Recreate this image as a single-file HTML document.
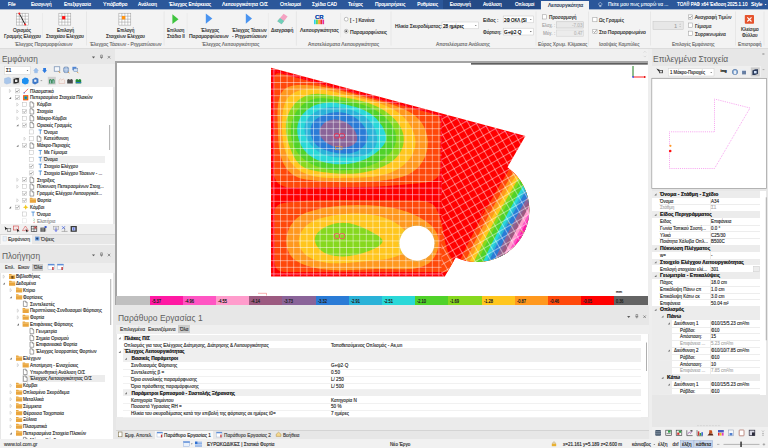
<!DOCTYPE html>
<html lang="el"><head><meta charset="utf-8"><title>ΤΟΛ ΡΑΦ</title><style>
html,body{margin:0;padding:0;}
body{width:768px;height:448px;overflow:hidden;background:#e7e7e7;position:relative;font-family:"Liberation Sans",sans-serif;}
#r{position:absolute;left:0;top:0;width:768px;height:448px;overflow:hidden;}
#r div{position:absolute;}
#r .t{white-space:nowrap;transform-origin:0 50%;text-shadow:0 0 0.2px currentColor;}
#r svg{position:absolute;left:0;top:0;}
</style></head><body><div id="r">
<div style="left:0.00px;top:0.00px;width:768.00px;height:9.00px;background:#2b579a;"></div>
<div style="left:0.00px;top:9.00px;width:768.00px;height:39.60px;background:#f3f3f3;"></div>
<div style="left:0.00px;top:9.00px;width:768.00px;height:1.00px;background:#a9bad2;"></div>
<div style="left:0.00px;top:48.30px;width:768.00px;height:0.50px;background:#dcdcdc;"></div>
<div style="left:0.00px;top:48.80px;width:768.00px;height:391.00px;background:#e7e7e7;"></div>
<div style="left:115.40px;top:48.80px;width:532.60px;height:13.00px;background:#f0f0f0;"></div>
<div style="left:115.20px;top:61.30px;width:532.80px;height:244.20px;background:#a4a4a4;"></div>
<div style="left:116.80px;top:63.20px;width:531.20px;height:242.30px;background:#ffffff;"></div>
<div style="left:0.00px;top:439.00px;width:768.00px;height:9.00px;background:#f1f1f1;"></div>
<svg width="768" height="448" viewBox="0 0 768 448">
<defs><clipPath id="slab"><path d="M271,67.8L525.4,136L444.8,276.6L271,276.6Z"/><circle cx="477" cy="209.8" r="52.3"/></clipPath>
<clipPath id="circ"><circle cx="477" cy="209.8" r="52.3"/></clipPath>
<pattern id="mesh" width="6.6" height="6.6" patternUnits="userSpaceOnUse"><path d="M0,3.3H6.6M3.3,0V6.6" stroke="#fff" stroke-width="0.62" stroke-opacity="0.72" fill="none"/></pattern>
<pattern id="mesh2" width="7" height="7" patternUnits="userSpaceOnUse" patternTransform="rotate(-30 441.5 195)"><path d="M0,3.5H7M3.5,0V7" stroke="#fff" stroke-width="0.62" stroke-opacity="0.72" fill="none"/></pattern>
</defs>
<g clip-path="url(#slab)">
<rect x="266" y="60" width="270" height="225" fill="#ff0000"/>
<path d="M274.2,80L274.2,174Q274.6,186 290,187.8L376,186.7L403,184.7L426,182.4Q440.5,180.6 440.5,168L440.5,122Q440.5,116 435,114.3L281,73.6Q274.2,71.8 274.2,79Z" fill="#ff480a"/>
<path d="M277.7,123.3L277.6,119.1L277.5,114.7L277.6,110.3L277.9,105.8L278.5,101.4L279.5,97.1L281.1,93.3L283.3,90.2L286.1,88.0L289.5,86.5L293.3,85.5L297.4,85.1L301.5,84.9L305.7,85.0L309.9,85.2L314.0,85.6L318.2,86.1L322.3,86.7L326.5,87.5L330.6,88.3L334.7,89.2L338.8,90.2L342.9,91.3L347.0,92.4L351.0,93.5L355.0,94.6L359.0,95.7L363.0,96.8L367.0,97.9L371.0,98.9L374.9,99.9L378.8,100.9L382.8,102.0L386.8,103.1L390.7,104.3L394.8,105.6L398.8,107.1L402.8,108.7L406.7,110.5L410.4,112.5L413.9,114.8L417.0,117.4L419.8,120.4L422.3,123.7L424.2,127.3L425.8,131.1L426.9,135.1L427.6,139.2L427.8,143.4L427.5,147.5L426.7,151.7L425.5,155.7L423.7,159.5L421.6,163.1L419.1,166.4L416.2,169.3L412.9,171.8L409.4,173.9L405.6,175.6L401.7,176.9L397.6,178.0L393.4,178.9L389.2,179.6L385.0,180.2L380.9,180.8L376.8,181.2L372.7,181.6L368.6,181.9L364.5,182.1L360.4,182.2L356.3,182.3L352.2,182.4L348.1,182.3L344.0,182.2L339.9,182.1L335.8,181.9L331.6,181.7L327.4,181.5L323.2,181.2L318.9,180.9L314.6,180.6L310.3,180.1L306.1,179.6L302.0,178.7L298.1,177.5L294.5,175.8L291.3,173.6L288.3,170.8L285.8,167.6L283.7,164.0L282.0,160.1L280.6,156.1L279.7,151.9L279.0,147.7L278.6,143.6L278.3,139.4L278.1,135.4L278.0,131.4L277.9,127.4Z" fill="#ff981e"/>
<path d="M282.1,123.0L282.2,119.1L282.4,115.1L282.9,111.2L283.6,107.5L284.6,103.9L285.9,100.7L287.7,97.8L290.0,95.4L292.8,93.4L295.8,91.8L299.2,90.6L302.7,89.8L306.4,89.2L310.0,88.9L313.6,88.8L317.2,89.0L320.8,89.3L324.4,89.8L327.9,90.4L331.5,91.2L335.0,92.0L338.6,92.9L342.2,93.8L345.8,94.7L349.4,95.7L353.1,96.5L356.8,97.4L360.4,98.3L364.1,99.1L367.8,100.0L371.4,100.9L375.0,101.9L378.5,103.0L382.0,104.2L385.3,105.5L388.6,106.9L391.8,108.5L394.9,110.3L397.8,112.2L400.7,114.4L403.3,116.8L405.8,119.4L408.1,122.3L410.2,125.4L412.0,128.7L413.5,132.1L414.6,135.7L415.3,139.2L415.5,142.8L415.2,146.3L414.4,149.8L413.0,153.2L411.2,156.4L409.0,159.4L406.5,162.3L403.7,164.9L400.7,167.2L397.6,169.2L394.3,170.9L391.0,172.4L387.5,173.7L384.0,174.7L380.4,175.5L376.8,176.2L373.2,176.7L369.6,177.1L366.0,177.3L362.4,177.5L358.7,177.6L355.1,177.7L351.4,177.7L347.8,177.8L344.1,177.8L340.4,177.9L336.8,178.0L333.1,178.0L329.4,177.9L325.7,177.8L322.0,177.5L318.4,177.0L314.8,176.4L311.1,175.5L307.6,174.4L304.2,173.1L300.9,171.5L297.9,169.5L295.1,167.2L292.7,164.6L290.5,161.7L288.6,158.6L287.0,155.3L285.6,151.9L284.6,148.4L283.7,145.0L283.0,141.4L282.6,137.9L282.3,134.3L282.1,130.6L282.0,126.8Z" fill="#ffc61e"/>
<path d="M286.2,122.6L286.7,119.5L287.6,116.4L288.7,113.5L290.0,110.6L291.6,107.9L293.4,105.4L295.4,103.1L297.6,100.9L300.0,99.0L302.6,97.4L305.4,96.1L308.3,95.0L311.3,94.3L314.4,93.9L317.7,93.8L321.0,94.0L324.3,94.3L327.7,94.8L331.1,95.4L334.4,96.0L337.6,96.6L340.8,97.2L343.9,97.6L347.0,98.1L350.0,98.6L353.1,99.1L356.2,99.7L359.2,100.4L362.3,101.2L365.4,102.1L368.5,103.1L371.5,104.2L374.5,105.4L377.4,106.7L380.2,108.2L383.0,109.8L385.7,111.5L388.3,113.4L390.8,115.5L393.2,117.7L395.4,120.1L397.5,122.6L399.4,125.3L401.0,128.1L402.3,131.1L403.2,134.1L403.7,137.3L403.8,140.5L403.4,143.7L402.7,146.8L401.6,149.7L400.2,152.4L398.5,154.9L396.5,157.3L394.3,159.4L391.9,161.4L389.3,163.2L386.5,164.8L383.6,166.3L380.6,167.6L377.5,168.8L374.4,169.9L371.2,170.8L368.0,171.5L364.8,172.2L361.6,172.7L358.4,173.2L355.3,173.5L352.2,173.7L349.1,173.8L346.0,173.8L342.8,173.8L339.7,173.7L336.6,173.5L333.4,173.2L330.2,172.9L327.0,172.6L323.7,172.2L320.4,171.7L317.1,171.2L313.9,170.6L310.7,169.9L307.6,169.0L304.7,167.8L302.1,166.3L299.7,164.5L297.7,162.3L295.9,159.9L294.3,157.2L292.8,154.4L291.5,151.4L290.3,148.4L289.2,145.2L288.2,142.0L287.4,138.8L286.7,135.5L286.2,132.3L286.0,129.0L285.9,125.8Z" fill="#86d81e"/>
<path d="M291.7,122.7L292.4,120.0L293.4,117.3L294.6,114.7L296.0,112.3L297.6,110.0L299.4,107.9L301.3,105.9L303.4,104.2L305.6,102.6L308.0,101.2L310.5,100.1L313.1,99.2L315.8,98.6L318.6,98.2L321.5,98.1L324.4,98.2L327.3,98.5L330.3,98.9L333.2,99.3L336.1,99.8L338.9,100.2L341.7,100.6L344.4,101.0L347.1,101.3L349.8,101.7L352.5,102.2L355.3,102.8L358.0,103.4L360.8,104.2L363.5,105.1L366.3,106.0L369.0,107.1L371.6,108.3L374.2,109.6L376.7,111.0L379.1,112.6L381.5,114.2L383.7,116.0L385.8,117.9L387.8,119.9L389.7,122.1L391.4,124.4L392.9,126.8L394.2,129.4L395.2,132.0L395.9,134.7L396.2,137.4L396.1,140.2L395.6,143.0L394.6,145.7L393.5,148.2L392.0,150.6L390.4,152.8L388.6,154.8L386.5,156.6L384.4,158.3L382.0,159.9L379.6,161.3L377.0,162.7L374.4,163.8L371.6,164.9L368.9,165.9L366.1,166.8L363.3,167.6L360.4,168.2L357.6,168.8L354.8,169.3L351.9,169.7L349.1,170.0L346.3,170.2L343.4,170.3L340.6,170.4L337.7,170.3L334.9,170.1L332.1,169.8L329.3,169.4L326.5,168.9L323.8,168.3L321.0,167.6L318.3,166.8L315.7,165.9L313.1,164.8L310.6,163.6L308.2,162.2L305.9,160.8L303.7,159.1L301.7,157.3L299.8,155.4L298.0,153.3L296.5,151.0L295.1,148.5L293.9,145.9L292.9,143.2L292.0,140.3L291.4,137.4L291.0,134.5L290.9,131.5L290.9,128.5L291.2,125.6Z" fill="#50d22a"/>
<path d="M298.2,122.8L298.9,120.6L299.9,118.5L301.0,116.5L302.4,114.6L303.9,112.9L305.5,111.2L307.3,109.7L309.2,108.4L311.2,107.1L313.3,106.0L315.5,105.1L317.7,104.3L320.0,103.7L322.3,103.2L324.7,102.9L327.1,102.7L329.5,102.6L331.9,102.6L334.4,102.8L336.8,103.0L339.2,103.4L341.7,103.8L344.1,104.2L346.5,104.7L348.8,105.3L351.2,105.9L353.4,106.5L355.7,107.1L357.9,107.8L360.1,108.5L362.2,109.4L364.3,110.3L366.3,111.3L368.3,112.4L370.2,113.6L372.1,114.9L373.9,116.4L375.7,118.0L377.4,119.8L379.0,121.8L380.6,123.9L382.1,126.1L383.4,128.3L384.5,130.7L385.3,133.0L386.0,135.3L386.2,137.5L386.1,139.7L385.5,141.8L384.4,143.8L383.1,145.7L381.5,147.5L379.9,149.3L378.1,150.9L376.3,152.4L374.4,153.9L372.5,155.2L370.4,156.5L368.4,157.7L366.2,158.7L364.1,159.7L361.8,160.6L359.6,161.4L357.3,162.1L355.0,162.7L352.6,163.2L350.2,163.6L347.8,163.9L345.4,164.1L343.0,164.3L340.6,164.3L338.2,164.3L335.8,164.2L333.4,163.9L331.0,163.6L328.7,163.2L326.3,162.7L324.0,162.2L321.7,161.5L319.5,160.7L317.3,159.9L315.2,158.9L313.1,157.8L311.2,156.6L309.3,155.2L307.5,153.8L305.9,152.1L304.3,150.3L302.9,148.4L301.6,146.3L300.5,144.1L299.5,141.9L298.7,139.5L298.1,137.1L297.6,134.7L297.3,132.2L297.2,129.8L297.3,127.4L297.7,125.0Z" fill="#2ad8d8"/>
<path d="M305.2,123.4L305.9,121.8L306.8,120.1L307.9,118.6L309.1,117.1L310.5,115.6L312.0,114.3L313.6,113.1L315.4,111.9L317.2,110.9L319.0,109.9L321.0,109.1L322.9,108.4L324.9,107.9L326.9,107.4L328.9,107.2L330.8,107.0L332.8,107.0L334.7,107.1L336.7,107.2L338.6,107.4L340.5,107.6L342.4,107.9L344.4,108.3L346.3,108.7L348.2,109.1L350.1,109.6L352.0,110.2L353.8,110.8L355.7,111.6L357.5,112.4L359.3,113.2L361.1,114.2L362.8,115.2L364.4,116.3L366.0,117.5L367.5,118.7L368.9,120.1L370.3,121.5L371.5,123.1L372.7,124.7L373.7,126.5L374.6,128.3L375.4,130.2L376.0,132.2L376.5,134.1L376.8,136.1L377.0,138.1L377.0,140.1L376.8,142.0L376.4,143.8L375.8,145.5L375.0,147.2L374.0,148.6L372.8,150.0L371.4,151.2L369.9,152.4L368.3,153.4L366.5,154.2L364.7,155.0L362.7,155.7L360.7,156.2L358.7,156.7L356.7,157.0L354.7,157.2L352.7,157.4L350.7,157.5L348.6,157.5L346.6,157.6L344.6,157.6L342.6,157.5L340.6,157.5L338.6,157.4L336.6,157.3L334.7,157.2L332.7,156.9L330.8,156.6L328.9,156.2L327.0,155.7L325.1,155.1L323.3,154.4L321.5,153.6L319.8,152.6L318.1,151.5L316.4,150.3L314.9,149.0L313.4,147.6L312.0,146.1L310.6,144.6L309.4,143.0L308.3,141.3L307.3,139.6L306.4,137.8L305.7,136.0L305.1,134.2L304.7,132.4L304.5,130.5L304.4,128.7L304.5,126.9L304.8,125.2Z" fill="#2ab2d8"/>
<path d="M312.5,123.3L313.3,122.1L314.2,120.9L315.3,119.8L316.5,118.9L317.8,117.9L319.1,117.1L320.6,116.3L322.0,115.6L323.6,114.9L325.1,114.4L326.7,113.9L328.2,113.4L329.8,113.0L331.3,112.7L332.9,112.5L334.4,112.3L336.0,112.2L337.5,112.1L339.0,112.2L340.6,112.3L342.1,112.5L343.6,112.7L345.1,113.1L346.6,113.5L348.1,114.0L349.5,114.6L351.0,115.2L352.4,116.0L353.9,116.8L355.3,117.7L356.6,118.7L358.0,119.7L359.2,120.8L360.4,122.0L361.6,123.2L362.7,124.4L363.6,125.7L364.5,127.0L365.3,128.3L366.0,129.7L366.6,131.1L367.1,132.5L367.4,133.9L367.6,135.3L367.6,136.7L367.5,138.1L367.3,139.5L366.9,140.9L366.3,142.2L365.6,143.5L364.8,144.7L363.8,145.9L362.8,147.1L361.7,148.1L360.5,149.1L359.2,150.0L357.9,150.7L356.5,151.4L355.1,152.0L353.6,152.5L352.1,152.9L350.6,153.2L349.1,153.4L347.5,153.6L345.9,153.6L344.2,153.7L342.6,153.6L341.0,153.5L339.3,153.4L337.7,153.2L336.0,152.9L334.4,152.6L332.7,152.3L331.1,152.0L329.5,151.6L327.9,151.1L326.4,150.6L324.9,150.1L323.4,149.5L322.0,148.8L320.7,148.1L319.4,147.3L318.1,146.4L317.0,145.4L315.9,144.4L314.9,143.3L314.0,142.0L313.2,140.7L312.5,139.4L311.9,137.9L311.4,136.5L311.0,135.0L310.7,133.4L310.6,131.9L310.6,130.4L310.7,128.9L310.9,127.4L311.3,126.0L311.8,124.6Z" fill="#2a7bd6"/>
<path d="M323.7,123.4L324.5,122.8L325.4,122.2L326.2,121.7L327.1,121.2L328.0,120.8L329.0,120.5L330.0,120.2L330.9,120.0L332.0,119.8L333.0,119.7L334.0,119.6L335.1,119.6L336.1,119.6L337.2,119.7L338.2,119.9L339.3,120.1L340.3,120.3L341.4,120.6L342.4,120.9L343.4,121.3L344.4,121.7L345.4,122.1L346.4,122.6L347.3,123.2L348.2,123.7L349.1,124.4L349.9,125.0L350.7,125.7L351.5,126.4L352.2,127.2L352.9,128.0L353.5,128.8L354.2,129.7L354.7,130.6L355.3,131.6L355.8,132.5L356.2,133.5L356.6,134.5L356.9,135.6L357.1,136.6L357.2,137.5L357.2,138.5L357.2,139.4L357.0,140.3L356.7,141.1L356.3,141.9L355.7,142.6L355.1,143.3L354.4,143.9L353.7,144.5L352.8,145.0L352.0,145.5L351.0,145.9L350.1,146.3L349.1,146.6L348.0,146.9L347.0,147.1L346.0,147.3L344.9,147.5L343.9,147.6L342.9,147.7L341.9,147.7L340.8,147.7L339.8,147.7L338.8,147.6L337.8,147.4L336.7,147.2L335.7,147.0L334.6,146.7L333.5,146.3L332.5,145.9L331.4,145.5L330.4,145.0L329.4,144.5L328.4,143.9L327.4,143.3L326.5,142.7L325.6,142.0L324.7,141.3L323.9,140.6L323.1,139.8L322.4,139.0L321.8,138.2L321.2,137.4L320.7,136.6L320.3,135.7L319.9,134.8L319.6,133.9L319.5,133.0L319.4,132.1L319.5,131.1L319.6,130.2L319.8,129.3L320.2,128.4L320.6,127.4L321.1,126.6L321.7,125.7L322.3,124.9L323.0,124.1Z" fill="#8a6499"/>
<path d="M274.6,212Q274.6,203.5 286.7,202.4L305.5,200.7L343,200.1L419,200.5Q432,201 436,208Q442,220 443.5,233.5Q445.5,246 448.2,252.3Q451,258 454.5,262L470,262L470,271.9L284,271.9Q274.6,271.9 274.6,262Z" fill="#ff480a"/>
<path d="M286.3,241.1L286.5,237.3L287.3,233.5L288.5,229.9L290.1,226.5L292.1,223.4L294.4,220.5L297.1,218.0L300.0,215.8L303.1,214.1L306.5,212.6L309.9,211.4L313.4,210.4L317.0,209.4L320.5,208.6L324.1,207.8L327.8,207.2L331.4,206.7L335.1,206.2L338.8,205.9L342.5,205.6L346.2,205.4L349.9,205.3L353.6,205.2L357.3,205.1L361.0,205.2L364.7,205.2L368.4,205.3L372.1,205.5L375.7,205.7L379.3,206.0L382.9,206.4L386.5,206.9L390.1,207.4L393.7,208.1L397.2,208.9L400.7,209.8L404.2,210.9L407.7,212.1L411.2,213.4L414.6,214.9L418.0,216.6L421.4,218.4L424.7,220.4L427.8,222.7L430.7,225.1L433.2,227.8L435.4,230.7L437.0,233.8L438.1,237.2L438.6,240.7L438.6,244.3L438.1,247.9L437.1,251.5L435.7,254.8L433.8,258.0L431.5,260.8L428.9,263.2L425.9,265.1L422.6,266.6L419.1,267.6L415.4,268.4L411.6,268.9L407.7,269.1L403.8,269.2L400.0,269.2L396.3,269.2L392.6,269.1L389.0,269.0L385.4,268.9L381.9,268.9L378.3,269.0L374.6,269.0L371.0,269.2L367.3,269.3L363.7,269.5L360.0,269.7L356.2,269.8L352.5,270.0L348.8,270.1L345.1,270.2L341.4,270.2L337.6,270.2L333.9,270.1L330.2,269.9L326.5,269.6L322.9,269.2L319.2,268.7L315.6,268.0L312.0,267.2L308.4,266.2L304.9,265.1L301.5,263.7L298.3,262.1L295.3,260.2L292.7,257.9L290.4,255.2L288.6,252.1L287.3,248.6L286.6,244.9Z" fill="#ff981e"/>
<path d="M298.8,240.9L299.0,238.3L299.6,235.8L300.6,233.3L301.9,230.9L303.5,228.7L305.4,226.6L307.4,224.8L309.7,223.1L312.0,221.7L314.4,220.5L316.9,219.5L319.4,218.6L322.0,217.9L324.6,217.3L327.2,216.7L329.8,216.1L332.5,215.6L335.1,215.2L337.8,214.8L340.4,214.4L343.1,214.1L345.7,213.9L348.4,213.7L351.1,213.6L353.8,213.5L356.4,213.5L359.1,213.5L361.8,213.7L364.5,213.8L367.1,214.1L369.8,214.4L372.5,214.7L375.1,215.2L377.7,215.8L380.3,216.4L382.8,217.2L385.3,218.0L387.8,219.0L390.3,220.0L392.6,221.3L395.0,222.6L397.2,224.0L399.5,225.6L401.6,227.4L403.7,229.3L405.7,231.3L407.5,233.5L409.1,235.7L410.4,238.0L411.2,240.3L411.5,242.6L411.3,244.8L410.5,247.0L409.1,248.9L407.3,250.7L405.0,252.3L402.6,253.7L400.0,255.0L397.3,256.0L394.6,256.9L391.9,257.7L389.2,258.4L386.6,258.9L384.0,259.4L381.4,259.8L378.8,260.1L376.2,260.4L373.6,260.6L371.0,260.8L368.4,261.0L365.8,261.2L363.2,261.4L360.5,261.7L357.9,261.9L355.1,262.2L352.4,262.4L349.7,262.7L347.0,262.9L344.2,263.1L341.5,263.2L338.7,263.3L336.0,263.3L333.3,263.3L330.6,263.2L327.9,262.9L325.3,262.6L322.7,262.1L320.1,261.6L317.6,260.9L315.1,260.0L312.6,259.0L310.2,257.8L307.9,256.5L305.7,254.9L303.8,253.1L302.1,251.0L300.7,248.7L299.6,246.2L299.0,243.6Z" fill="#ffc61e"/>
<path d="M314.8,239.8L314.9,238.3L315.2,236.9L315.7,235.6L316.5,234.3L317.4,233.1L318.4,231.9L319.6,230.8L320.9,229.7L322.3,228.8L323.8,227.8L325.4,227.0L326.9,226.2L328.5,225.6L330.1,225.0L331.7,224.4L333.3,224.0L334.9,223.6L336.5,223.3L338.1,223.1L339.6,222.9L341.2,222.9L342.8,222.8L344.3,222.9L345.9,223.0L347.4,223.1L349.0,223.3L350.5,223.6L352.0,223.9L353.5,224.3L355.0,224.7L356.5,225.2L358.0,225.7L359.5,226.2L361.0,226.8L362.5,227.5L364.1,228.2L365.6,228.9L367.1,229.6L368.7,230.4L370.3,231.2L371.9,232.1L373.5,233.0L375.1,233.9L376.7,234.8L378.1,235.8L379.5,236.7L380.6,237.7L381.6,238.7L382.2,239.7L382.5,240.7L382.5,241.7L382.1,242.7L381.3,243.8L380.4,244.7L379.1,245.7L377.7,246.7L376.2,247.6L374.6,248.4L372.9,249.2L371.3,250.0L369.6,250.7L368.0,251.3L366.3,251.9L364.7,252.5L363.1,253.0L361.5,253.5L359.9,253.9L358.3,254.3L356.7,254.7L355.2,255.0L353.7,255.3L352.1,255.6L350.6,255.8L349.1,256.0L347.5,256.2L346.0,256.3L344.5,256.4L342.9,256.4L341.3,256.4L339.7,256.3L338.1,256.2L336.5,256.1L334.8,255.9L333.2,255.6L331.5,255.3L329.9,254.9L328.3,254.4L326.8,253.8L325.3,253.2L323.8,252.4L322.4,251.6L321.1,250.6L319.9,249.6L318.7,248.4L317.7,247.1L316.7,245.7L316.0,244.3L315.4,242.8L315.0,241.3Z" fill="#86d81e"/>
<g clip-path="url(#circ)">
<path d="M521.1,150.0L517.4,156.0L513.6,162.0L510.0,168.0L506.4,174.0L502.8,180.0L499.3,186.0L495.8,192.0L492.4,198.0L489.0,204.0L485.7,210.0L482.5,216.0L479.3,222.0L476.1,228.0L473.0,234.0L469.9,240.0L466.9,246.0L464.0,252.0L461.1,258.0L458.2,264.0L455.4,270.0L560,270L560,150Z" fill="#ff480a"/>
<path d="M526.9,150.0L523.2,156.0L519.4,162.0L515.8,168.0L512.2,174.0L508.6,180.0L505.1,186.0L501.6,192.0L498.2,198.0L494.8,204.0L491.5,210.0L488.3,216.0L485.1,222.0L481.9,228.0L478.8,234.0L475.7,240.0L472.7,246.0L469.8,252.0L466.9,258.0L464.0,264.0L461.2,270.0L560,270L560,150Z" fill="#ff981e"/>
<path d="M531.4,150.0L527.7,156.0L523.9,162.0L520.3,168.0L516.7,174.0L513.1,180.0L509.6,186.0L506.1,192.0L502.7,198.0L499.3,204.0L496.0,210.0L492.8,216.0L489.6,222.0L486.4,228.0L483.3,234.0L480.2,240.0L477.2,246.0L474.3,252.0L471.4,258.0L468.5,264.0L465.7,270.0L560,270L560,150Z" fill="#ffc61e"/>
<path d="M535.8,150.0L532.1,156.0L528.3,162.0L524.7,168.0L521.1,174.0L517.5,180.0L514.0,186.0L510.5,192.0L507.1,198.0L503.7,204.0L500.4,210.0L497.2,216.0L494.0,222.0L490.8,228.0L487.7,234.0L484.6,240.0L481.6,246.0L478.7,252.0L475.8,258.0L472.9,264.0L470.1,270.0L560,270L560,150Z" fill="#86d81e"/>
<path d="M539.3,150.0L535.6,156.0L531.8,162.0L528.2,168.0L524.6,174.0L521.0,180.0L517.5,186.0L514.0,192.0L510.6,198.0L507.2,204.0L503.9,210.0L500.7,216.0L497.5,222.0L494.3,228.0L491.2,234.0L488.1,240.0L485.1,246.0L482.2,252.0L479.3,258.0L476.4,264.0L473.6,270.0L560,270L560,150Z" fill="#50d22a"/>
<path d="M544.8,150.0L541.1,156.0L537.3,162.0L533.7,168.0L530.1,174.0L526.5,180.0L523.0,186.0L519.5,192.0L516.1,198.0L512.7,204.0L509.4,210.0L506.2,216.0L503.0,222.0L499.8,228.0L496.7,234.0L493.6,240.0L490.6,246.0L487.7,252.0L484.8,258.0L481.9,264.0L479.1,270.0L560,270L560,150Z" fill="#2ad8d8"/>
<path d="M548.1,150.0L544.4,156.0L540.6,162.0L537.0,168.0L533.4,174.0L529.8,180.0L526.3,186.0L522.8,192.0L519.4,198.0L516.0,204.0L512.7,210.0L509.5,216.0L506.3,222.0L503.1,228.0L500.0,234.0L496.9,240.0L493.9,246.0L491.0,252.0L488.1,258.0L485.2,264.0L482.4,270.0L560,270L560,150Z" fill="#2ab2d8"/>
<path d="M550.5,150.0L546.8,156.0L543.0,162.0L539.4,168.0L535.8,174.0L532.2,180.0L528.7,186.0L525.2,192.0L521.8,198.0L518.4,204.0L515.1,210.0L511.9,216.0L508.7,222.0L505.5,228.0L502.4,234.0L499.3,240.0L496.3,246.0L493.4,252.0L490.5,258.0L487.6,264.0L484.8,270.0L560,270L560,150Z" fill="#2a7bd6"/>
<path d="M555.5,150.0L551.8,156.0L548.0,162.0L544.4,168.0L540.8,174.0L537.2,180.0L533.7,186.0L530.2,192.0L526.8,198.0L523.4,204.0L520.1,210.0L516.9,216.0L513.7,222.0L510.5,228.0L507.4,234.0L504.3,240.0L501.3,246.0L498.4,252.0L495.5,258.0L492.6,264.0L489.8,270.0L560,270L560,150Z" fill="#8a6499"/>
<path d="M558.9,150.0L555.2,156.0L551.4,162.0L547.8,168.0L544.2,174.0L540.6,180.0L537.1,186.0L533.6,192.0L530.2,198.0L526.8,204.0L523.5,210.0L520.3,216.0L517.1,222.0L513.9,228.0L510.8,234.0L507.7,240.0L504.7,246.0L501.8,252.0L498.9,258.0L496.0,264.0L493.2,270.0L560,270L560,150Z" fill="#9c5a80"/>
<path d="M562.4,150.0L558.7,156.0L554.9,162.0L551.3,168.0L547.7,174.0L544.1,180.0L540.6,186.0L537.1,192.0L533.7,198.0L530.3,204.0L527.0,210.0L523.8,216.0L520.6,222.0L517.4,228.0L514.3,234.0L511.2,240.0L508.2,246.0L505.3,252.0L502.4,258.0L499.5,264.0L496.7,270.0L560,270L560,150Z" fill="#ff9ccc"/>
<path d="M565.9,150.0L562.2,156.0L558.4,162.0L554.8,168.0L551.2,174.0L547.6,180.0L544.1,186.0L540.6,192.0L537.2,198.0L533.8,204.0L530.5,210.0L527.3,216.0L524.1,222.0L520.9,228.0L517.8,234.0L514.7,240.0L511.7,246.0L508.8,252.0L505.9,258.0L503.0,264.0L500.2,270.0L560,270L560,150Z" fill="#ff55c3"/>
<path d="M568.4,150.0L564.7,156.0L560.9,162.0L557.3,168.0L553.7,174.0L550.1,180.0L546.6,186.0L543.1,192.0L539.7,198.0L536.3,204.0L533.0,210.0L529.8,216.0L526.6,222.0L523.4,228.0L520.3,234.0L517.2,240.0L514.2,246.0L511.3,252.0L508.4,258.0L505.5,264.0L502.7,270.0L560,270L560,150Z" fill="#ff19a3"/>
</g>
<rect x="266" y="60" width="175.5" height="225" fill="url(#mesh)"/>
<rect x="441.5" y="60" width="100" height="225" fill="url(#mesh2)"/>
<path d="M273.3,71V275M273.5,188.6H441M273.5,194.6H441M273.5,274.6H444M441.2,116V194M273.5,70.6L523,137.4" stroke="#ff30c8" stroke-width="0.45" stroke-dasharray="2.2,1.6" fill="none" opacity="0.75"/>
<path d="M339.3,86V277" stroke="#f4e8b0" stroke-width="0.5" opacity="0.75"/>
<rect x="334.3" y="133.6" width="5" height="4.4" rx="1.6" fill="none" stroke="#f03050" stroke-width="0.9"/><rect x="339.5" y="133.6" width="5" height="4.4" rx="1.6" fill="none" stroke="#f03050" stroke-width="0.9"/>
<rect x="335.6" y="146.6" width="6.4" height="3.2" fill="none" stroke="#f0a030" stroke-width="0.5"/>
<rect x="334.4" y="233.6" width="5" height="5" rx="1.6" fill="none" stroke="#e86060" stroke-width="0.95"/><rect x="339.6" y="233.6" width="5" height="5" rx="1.6" fill="none" stroke="#e86060" stroke-width="0.95"/>
</g>
<path d="M484,207.5L524.3,232.9" stroke="#c0a828" stroke-width="0.55" stroke-dasharray="6.5,7.5" fill="none"/>
<rect x="482.6" y="210.4" width="4.6" height="5.4" fill="none" stroke="#ff7a20" stroke-width="0.45" transform="rotate(30 485 213)"/>
<circle cx="417" cy="243.2" r="17.5" fill="#fff"/>
<circle cx="417" cy="243.2" r="18.3" fill="none" stroke="#6fd4c4" stroke-width="0.45" stroke-dasharray="1,1.3" opacity="0.8"/>
<path d="M633,66V77" stroke="#1a7a1a" stroke-width="1"/><path d="M633,77H645" stroke="#ff2020" stroke-width="1"/><rect x="632.3" y="76.2" width="1.5" height="1.6" fill="#3050ff"/><rect x="644" y="76.2" width="1.5" height="1.6" fill="#e00000"/>
<path d="M471,63.9H647.8" stroke="#2a2a2a" stroke-width="1.2"/>
<path d="M258,293.3H266.5V295.5" stroke="#f06060" stroke-width="0.5" fill="none"/>
</svg>
<div style="left:116.40px;top:295.70px;width:33.25px;height:9.50px;background:#c0c0c0;"></div>
<div style="left:149.60px;top:295.70px;width:33.25px;height:9.50px;background:#ff19a3;"></div>
<div style="left:182.80px;top:295.70px;width:33.25px;height:9.50px;background:#ff55c3;"></div>
<div style="left:216.00px;top:295.70px;width:33.25px;height:9.50px;background:#ff9ccc;"></div>
<div style="left:249.20px;top:295.70px;width:33.25px;height:9.50px;background:#9c5a80;"></div>
<div style="left:282.40px;top:295.70px;width:33.25px;height:9.50px;background:#8a6499;"></div>
<div style="left:315.60px;top:295.70px;width:33.25px;height:9.50px;background:#2a7bd6;"></div>
<div style="left:348.80px;top:295.70px;width:33.25px;height:9.50px;background:#2ab2d8;"></div>
<div style="left:382.00px;top:295.70px;width:33.25px;height:9.50px;background:#2ad8d8;"></div>
<div style="left:415.20px;top:295.70px;width:33.25px;height:9.50px;background:#50d22a;"></div>
<div style="left:448.40px;top:295.70px;width:33.25px;height:9.50px;background:#86d81e;"></div>
<div style="left:481.60px;top:295.70px;width:33.25px;height:9.50px;background:#ffc61e;"></div>
<div style="left:514.80px;top:295.70px;width:33.25px;height:9.50px;background:#ff981e;"></div>
<div style="left:548.00px;top:295.70px;width:33.25px;height:9.50px;background:#ff480a;"></div>
<div style="left:581.20px;top:295.70px;width:33.25px;height:9.50px;background:#ff0000;"></div>
<div style="left:614.40px;top:295.70px;width:33.25px;height:9.50px;background:#646464;"></div>
<div class="t" style="left:151.60px;top:298.79px;font-size:4.60px;line-height:5.52px;color:#262626;transform:scaleX(0.858);">-5.37</div>
<div class="t" style="left:184.80px;top:298.79px;font-size:4.60px;line-height:5.52px;color:#262626;transform:scaleX(0.858);">-4.96</div>
<div class="t" style="left:218.00px;top:298.79px;font-size:4.60px;line-height:5.52px;color:#262626;transform:scaleX(0.858);">-4.55</div>
<div class="t" style="left:251.20px;top:298.79px;font-size:4.60px;line-height:5.52px;color:#262626;transform:scaleX(0.858);">-4.14</div>
<div class="t" style="left:284.40px;top:298.79px;font-size:4.60px;line-height:5.52px;color:#262626;transform:scaleX(0.858);">-3.73</div>
<div class="t" style="left:317.60px;top:298.79px;font-size:4.60px;line-height:5.52px;color:#262626;transform:scaleX(0.858);">-3.32</div>
<div class="t" style="left:350.80px;top:298.79px;font-size:4.60px;line-height:5.52px;color:#262626;transform:scaleX(0.858);">-2.91</div>
<div class="t" style="left:384.00px;top:298.79px;font-size:4.60px;line-height:5.52px;color:#262626;transform:scaleX(0.858);">-2.51</div>
<div class="t" style="left:417.20px;top:298.79px;font-size:4.60px;line-height:5.52px;color:#262626;transform:scaleX(0.858);">-2.10</div>
<div class="t" style="left:450.40px;top:298.79px;font-size:4.60px;line-height:5.52px;color:#262626;transform:scaleX(0.858);">-1.69</div>
<div class="t" style="left:483.60px;top:298.79px;font-size:4.60px;line-height:5.52px;color:#262626;transform:scaleX(0.858);">-1.28</div>
<div class="t" style="left:516.80px;top:298.79px;font-size:4.60px;line-height:5.52px;color:#262626;transform:scaleX(0.858);">-0.87</div>
<div class="t" style="left:550.00px;top:298.79px;font-size:4.60px;line-height:5.52px;color:#262626;transform:scaleX(0.858);">-0.46</div>
<div class="t" style="left:583.20px;top:298.79px;font-size:4.60px;line-height:5.52px;color:#262626;transform:scaleX(0.858);">-0.05</div>
<div class="t" style="left:616.40px;top:298.79px;font-size:4.60px;line-height:5.52px;color:#262626;transform:scaleX(0.827);">0.36</div>
<div class="t" style="left:615.60px;top:289.77px;font-size:3.60px;line-height:4.32px;color:#333;transform:scaleX(1.034);">mm</div>
<div style="left:442.80px;top:0.00px;width:97.70px;height:9.00px;background:#244a86;"></div>
<div style="left:540.50px;top:0.80px;width:48.50px;height:9.40px;background:#f3f3f3;"></div>
<svg width="768" height="60" viewBox="0 0 768 60"><path d="M600.3,2.6a1.6,1.6 0 1 1 -0.01,0M599.6,5.6h1.4v1h-1.4z" fill="none" stroke="#dfe7f3" stroke-width="0.5"/><path d="M764.6,4l1,1.2l1,-1.2z" fill="#fff"/><path d="M86.5,11.5V45.5" stroke="#dadada" stroke-width="0.5"/><path d="M164.1,11.5V45.5" stroke="#dadada" stroke-width="0.5"/><path d="M296.4,11.5V45.5" stroke="#dadada" stroke-width="0.5"/><path d="M391.0,11.5V45.5" stroke="#dadada" stroke-width="0.5"/><path d="M536.0,11.5V45.5" stroke="#dadada" stroke-width="0.5"/><path d="M588.5,11.5V45.5" stroke="#dadada" stroke-width="0.5"/><path d="M650.5,11.5V45.5" stroke="#dadada" stroke-width="0.5"/><path d="M735.5,11.5V45.5" stroke="#dadada" stroke-width="0.5"/><path d="M764.0,11.5V45.5" stroke="#dadada" stroke-width="0.5"/><path d="M42.5,13V37.5" stroke="#e2e2e2" stroke-width="0.5"/><path d="M187.2,13V37.5" stroke="#e2e2e2" stroke-width="0.5"/><path d="M268.4,13V37.5" stroke="#e2e2e2" stroke-width="0.5"/><path d="M340.6,13V37.5" stroke="#e2e2e2" stroke-width="0.5"/><rect x="16.3" y="13.2" width="11.9" height="11.9" fill="#fff" stroke="#8e8e8e" stroke-width="0.45"/><path d="M19.28,13.2V25.1M16.3,16.18H28.2M22.25,13.2V25.1M16.3,19.15H28.2M25.23,13.2V25.1M16.3,22.12H28.2" stroke="#8a8a8a" stroke-width="0.45" fill="none"/><path d="M19.3,13.6L25.1,24.4" stroke="#111" stroke-width="0.9"/><circle cx="19.3" cy="13.6" r="1" fill="#ff2020"/><circle cx="25.2" cy="24.5" r="1" fill="#ff2020"/><rect x="58.9" y="13.2" width="11.9" height="11.9" fill="#fff" stroke="#8e8e8e" stroke-width="0.45"/><path d="M61.88,13.2V25.1M58.9,16.18H70.8M64.85,13.2V25.1M58.9,19.15H70.8M67.83,13.2V25.1M58.9,22.12H70.8" stroke="#8a8a8a" stroke-width="0.45" fill="none"/><rect x="62.1" y="16.1" width="3.2" height="3.2" fill="#ff1010"/><rect x="118.9" y="13.2" width="11.9" height="11.9" fill="#fff" stroke="#8e8e8e" stroke-width="0.45"/><path d="M121.88,13.2V25.1M118.9,16.18H130.8M124.85,13.2V25.1M118.9,19.15H130.8M127.83,13.2V25.1M118.9,22.12H130.8" stroke="#8a8a8a" stroke-width="0.45" fill="none"/><rect x="121.9" y="16.0" width="3.4" height="3.4" fill="#ff9410"/><path d="M172.4,14.2V24.1L178.5,19.2Z" fill="#3fc43f"/><path d="M205.8,13.5V23.8L212.3,18.6Z" fill="#4a94f0"/><path d="M245.8,13.5V23.8L252,18.6Z" fill="#4a94f0"/><path d="M283.6,13.7L287.6,16.6L281.6,24.2L277.3,21.2Z" fill="#f4a2c2"/><path d="M280,17.9L284.2,20.9L281.6,24.2L277.3,21.2Z" fill="#6fd0b8"/><rect x="314.0" y="19.6" width="1.7" height="4.6" fill="#2ad0f0"/><rect x="316.1" y="19.6" width="1.7" height="4.6" fill="#5fd040"/><rect x="318.2" y="19.6" width="1.7" height="4.6" fill="#ffa020"/><rect x="320.3" y="19.6" width="1.7" height="4.6" fill="#f03030"/><rect x="322.4" y="19.6" width="1.7" height="4.6" fill="#e030a0"/><circle cx="346.2" cy="19.2" r="1.9" fill="#fff" stroke="#777" stroke-width="0.45"/><circle cx="346.2" cy="31.2" r="1.9" fill="#fff" stroke="#777" stroke-width="0.45"/><circle cx="346.2" cy="31.2" r="0.9" fill="#444"/><rect x="442.0" y="22.0" width="36.5" height="6.8" fill="#fff" stroke="#c6c6c6" stroke-width="0.5"/><path d="M474.9,24.9l0.9,1.1l0.9,-1.1z" fill="#555"/><rect x="503.2" y="16.0" width="30.3" height="6.8" fill="#fff" stroke="#c6c6c6" stroke-width="0.5"/><path d="M529.9,18.9l0.9,1.1l0.9,-1.1z" fill="#555"/><rect x="503.2" y="28.2" width="30.3" height="6.8" fill="#fff" stroke="#c6c6c6" stroke-width="0.5"/><path d="M529.9,31.1l0.9,1.1l0.9,-1.1z" fill="#555"/><rect x="542.40" y="14.80" width="4.20" height="4.20" fill="#fff" stroke="#8c8c8c" stroke-width="0.45"/><rect x="556.5" y="21.8" width="27" height="6.2"  fill="#e9e9e9" stroke="#bdbdbd" stroke-width="0.5"/><rect x="556.5" y="30" width="27" height="6.2" fill="#ececec" stroke="#cfcfcf" stroke-width="0.5"/><rect x="592.80" y="17.60" width="4.20" height="4.20" fill="#fff" stroke="#8c8c8c" stroke-width="0.45"/><rect x="592.80" y="29.30" width="4.20" height="4.20" fill="#fff" stroke="#8c8c8c" stroke-width="0.45"/><path d="M593.50,31.40l1.05,1.18l1.89,-2.31" stroke="#5a5a5a" stroke-width="0.55" fill="none"/><rect x="653" y="21.5" width="30.2" height="8" fill="#e7e7e7" stroke="#c4c4c4" stroke-width="0.5"/><path d="M679.3,24.6l0.8,-1l0.8,1zM679.3,26.2l0.8,1l0.8,-1z" fill="#aaa"/><rect x="688.30" y="14.90" width="4.20" height="4.20" fill="#fff" stroke="#8c8c8c" stroke-width="0.45"/><path d="M689.00,17.00l1.05,1.18l1.89,-2.31" stroke="#5a5a5a" stroke-width="0.55" fill="none"/><rect x="688.30" y="23.00" width="4.20" height="4.20" fill="#fff" stroke="#8c8c8c" stroke-width="0.45"/><rect x="688.30" y="31.10" width="4.20" height="4.20" fill="#fff" stroke="#8c8c8c" stroke-width="0.45"/><rect x="744.8" y="15" width="9.2" height="8.8" rx="0.8" fill="#e5532d"/><path d="M747.3,17.3l4.2,4.2M751.5,17.3l-4.2,4.2" stroke="#fff" stroke-width="1.1"/><path d="M643.6,52.6l1.3,-1.3l1.3,1.3M643.6,55.8l1.3,1.3l1.3,-1.3" stroke="#c4c4c4" stroke-width="0.5" fill="none"/></svg>
<div class="t" style="left:8.00px;top:2.30px;font-size:4.80px;line-height:5.76px;color:#ffffff;transform:scaleX(0.970);">File</div>
<div class="t" style="left:31.00px;top:2.30px;font-size:4.80px;line-height:5.76px;color:#ffffff;transform:scaleX(0.966);">Εισαγωγή</div>
<div class="t" style="left:64.00px;top:2.30px;font-size:4.80px;line-height:5.76px;color:#ffffff;transform:scaleX(0.976);">Επεξεργασία</div>
<div class="t" style="left:103.00px;top:2.30px;font-size:4.80px;line-height:5.76px;color:#ffffff;transform:scaleX(1.075);">Υπόβαθρο</div>
<div class="t" style="left:138.00px;top:2.30px;font-size:4.80px;line-height:5.76px;color:#ffffff;transform:scaleX(1.009);">Ανάλυση</div>
<div class="t" style="left:169.00px;top:2.30px;font-size:4.80px;line-height:5.76px;color:#ffffff;">Έλεγχος Επάρκειας</div>
<div class="t" style="left:222.00px;top:2.30px;font-size:4.80px;line-height:5.76px;color:#ffffff;transform:scaleX(1.065);">Λειτουργικότητα Ο/Σ</div>
<div class="t" style="left:280.00px;top:2.30px;font-size:4.80px;line-height:5.76px;color:#ffffff;transform:scaleX(1.051);">Οπλισμοί</div>
<div class="t" style="left:312.00px;top:2.30px;font-size:4.80px;line-height:5.76px;color:#ffffff;transform:scaleX(0.976);">Σχέδια CAD</div>
<div class="t" style="left:348.00px;top:2.30px;font-size:4.80px;line-height:5.76px;color:#ffffff;transform:scaleX(1.031);">Τεύχος</div>
<div class="t" style="left:375.00px;top:2.30px;font-size:4.80px;line-height:5.76px;color:#ffffff;transform:scaleX(1.025);">Προμετρήσεις</div>
<div class="t" style="left:417.20px;top:2.30px;font-size:4.80px;line-height:5.76px;color:#ffffff;">Ρυθμίσεις</div>
<div class="t" style="left:449.70px;top:2.30px;font-size:4.80px;line-height:5.76px;color:#ffffff;">Εισαγωγή</div>
<div class="t" style="left:483.40px;top:2.30px;font-size:4.80px;line-height:5.76px;color:#ffffff;transform:scaleX(0.988);">Ανάλυση</div>
<div class="t" style="left:514.70px;top:2.30px;font-size:4.80px;line-height:5.76px;color:#ffffff;transform:scaleX(0.966);">Οπλισμοί</div>
<div class="t" style="left:547.50px;top:2.69px;font-size:4.60px;line-height:5.52px;color:#3a4a66;transform:scaleX(1.088);">Λειτουργικότητα</div>
<div class="t" style="left:607.50px;top:2.49px;font-size:4.60px;line-height:5.52px;color:#dfe7f3;transform:scaleX(1.069);">Πείτε μου πως μπορώ να ...</div>
<div class="t" style="left:677.00px;top:2.49px;font-size:4.60px;line-height:5.52px;color:#ffffff;transform:scaleX(0.988);">ΤΟΛ® ΡΑΦ x64 Έκδοση 2025.1.10</div>
<div class="t" style="left:751.00px;top:2.49px;font-size:4.60px;line-height:5.52px;color:#ffffff;transform:scaleX(1.125);">Style</div>
<div class="t" style="left:13.20px;top:27.70px;font-size:4.90px;line-height:5.88px;color:#454545;transform:scaleX(0.967);">Ορισμός</div>
<div class="t" style="left:3.80px;top:33.70px;font-size:4.90px;line-height:5.88px;color:#454545;transform:scaleX(0.956);">Γραμμής Ελέγχου</div>
<div class="t" style="left:56.90px;top:27.70px;font-size:4.90px;line-height:5.88px;color:#454545;transform:scaleX(0.949);">Επιλογή</div>
<div class="t" style="left:46.00px;top:33.70px;font-size:4.90px;line-height:5.88px;color:#454545;transform:scaleX(0.967);">Στοιχείου Ελέγχου</div>
<div class="t" style="left:15.00px;top:41.90px;font-size:4.90px;line-height:5.88px;color:#7a7a7a;transform:scaleX(0.981);">Έλεγχος Παραμορφώσεων</div>
<div class="t" style="left:116.60px;top:27.70px;font-size:4.90px;line-height:5.88px;color:#454545;transform:scaleX(0.960);">Επιλογή</div>
<div class="t" style="left:105.80px;top:33.70px;font-size:4.90px;line-height:5.88px;color:#454545;transform:scaleX(0.971);">Στοιχείων Ελέγχου</div>
<div class="t" style="left:89.50px;top:41.90px;font-size:4.90px;line-height:5.88px;color:#7a7a7a;transform:scaleX(0.991);">Έλεγχος Τάσεων - Ρηγματώσεων</div>
<div class="t" style="left:166.60px;top:27.70px;font-size:4.90px;line-height:5.88px;color:#454545;transform:scaleX(0.935);">Επίλυση</div>
<div class="t" style="left:166.60px;top:33.70px;font-size:4.90px;line-height:5.88px;color:#454545;transform:scaleX(0.988);">Στάδιο ΙΙ</div>
<div class="t" style="left:200.60px;top:27.70px;font-size:4.90px;line-height:5.88px;color:#454545;transform:scaleX(0.986);">Έλεγχος</div>
<div class="t" style="left:189.40px;top:33.70px;font-size:4.90px;line-height:5.88px;color:#454545;transform:scaleX(1.020);">Παραμορφώσεων</div>
<div class="t" style="left:231.50px;top:27.70px;font-size:4.90px;line-height:5.88px;color:#454545;transform:scaleX(0.951);">Έλεγχος Τάσεων</div>
<div class="t" style="left:231.50px;top:33.70px;font-size:4.90px;line-height:5.88px;color:#454545;transform:scaleX(1.013);">- Ρηγματώσεων</div>
<div class="t" style="left:271.30px;top:27.70px;font-size:4.90px;line-height:5.88px;color:#454545;transform:scaleX(1.054);">Διαγραφή</div>
<div class="t" style="left:201.50px;top:41.90px;font-size:4.90px;line-height:5.88px;color:#7a7a7a;transform:scaleX(1.018);">Έλεγχος Λειτουργικότητας</div>
<div class="t" style="left:314.60px;top:14.26px;font-size:5.40px;line-height:6.48px;color:#1a4fae;font-weight:bold;transform:scaleX(1.103);">CR</div>
<div class="t" style="left:299.50px;top:27.70px;font-size:4.90px;line-height:5.88px;color:#454545;transform:scaleX(1.048);">Λειτουργικότητας</div>
<div class="t" style="left:350.00px;top:17.50px;font-size:4.90px;line-height:5.88px;color:#454545;">[ - ] Κανένα</div>
<div class="t" style="left:350.30px;top:29.50px;font-size:4.90px;line-height:5.88px;color:#454545;transform:scaleX(1.028);">Παραμορφώσεις</div>
<div class="t" style="left:308.20px;top:41.90px;font-size:4.90px;line-height:5.88px;color:#7a7a7a;transform:scaleX(1.028);">Αποτελέσματα Λειτουργικότητας</div>
<div class="t" style="left:394.50px;top:23.70px;font-size:4.90px;line-height:5.88px;color:#454545;transform:scaleX(0.992);">Ηλικία Σκυροδέματος:</div>
<div class="t" style="left:443.20px;top:23.70px;font-size:4.90px;line-height:5.88px;color:#222;transform:scaleX(0.951);">28 ημέρες</div>
<div class="t" style="left:483.20px;top:17.50px;font-size:4.90px;line-height:5.88px;color:#454545;transform:scaleX(1.039);">Είδος   :</div>
<div class="t" style="left:504.00px;top:17.60px;font-size:4.90px;line-height:5.88px;color:#222;transform:scaleX(0.885);">2Φ ΟΚΛ (Sl</div>
<div class="t" style="left:483.20px;top:29.90px;font-size:4.90px;line-height:5.88px;color:#454545;transform:scaleX(0.939);">Φόρτιση:</div>
<div class="t" style="left:504.00px;top:29.90px;font-size:4.90px;line-height:5.88px;color:#222;transform:scaleX(0.954);">G+ψ2·Q</div>
<div class="t" style="left:436.00px;top:41.90px;font-size:4.90px;line-height:5.88px;color:#7a7a7a;">Αποτελέσματα Ανάλυσης</div>
<div class="t" style="left:549.00px;top:15.30px;font-size:4.90px;line-height:5.88px;color:#454545;transform:scaleX(0.968);">Προσαρμογή</div>
<div class="t" style="left:542.00px;top:23.20px;font-size:4.90px;line-height:5.88px;color:#b0b0b0;transform:scaleX(0.872);">Ελαχ. :</div>
<div class="t" style="left:543.00px;top:31.40px;font-size:4.90px;line-height:5.88px;color:#b0b0b0;transform:scaleX(0.953);">Μέγ. :</div>
<div class="t" style="left:572.00px;top:23.20px;font-size:4.90px;line-height:5.88px;color:#c0c0c0;transform:scaleX(0.940);">-7.03</div>
<div class="t" style="left:574.00px;top:31.40px;font-size:4.90px;line-height:5.88px;color:#c0c0c0;transform:scaleX(0.891);">0.47</div>
<div class="t" style="left:537.70px;top:41.90px;font-size:4.90px;line-height:5.88px;color:#7a7a7a;transform:scaleX(0.973);">Εύρος Χρωμ. Κλίμακας</div>
<div class="t" style="left:599.20px;top:17.70px;font-size:4.90px;line-height:5.88px;color:#454545;transform:scaleX(0.965);">Ως Γραμμές</div>
<div class="t" style="left:599.20px;top:29.90px;font-size:4.90px;line-height:5.88px;color:#454545;transform:scaleX(1.012);">Στο Παραμορφωμένο</div>
<div class="t" style="left:599.20px;top:41.90px;font-size:4.90px;line-height:5.88px;color:#7a7a7a;transform:scaleX(0.960);">Ισοϋψείς Καμπύλες</div>
<div class="t" style="left:674.30px;top:23.70px;font-size:4.90px;line-height:5.88px;color:#a8a8a8;">1</div>
<div class="t" style="left:694.70px;top:15.20px;font-size:4.90px;line-height:5.88px;color:#454545;">Αναγραφή Τιμών</div>
<div class="t" style="left:694.70px;top:23.70px;font-size:4.90px;line-height:5.88px;color:#454545;transform:scaleX(0.933);">Γέμισμα</div>
<div class="t" style="left:694.70px;top:31.50px;font-size:4.90px;line-height:5.88px;color:#454545;transform:scaleX(0.981);">Συρρικνωμένα</div>
<div class="t" style="left:671.50px;top:41.90px;font-size:4.90px;line-height:5.88px;color:#7a7a7a;transform:scaleX(0.946);">Επιλογές Εμφάνισης</div>
<div class="t" style="left:741.30px;top:26.90px;font-size:4.90px;line-height:5.88px;color:#454545;transform:scaleX(0.949);">Κλείσιμο</div>
<div class="t" style="left:741.80px;top:33.10px;font-size:4.90px;line-height:5.88px;color:#454545;transform:scaleX(0.927);">Φύλλου</div>
<div class="t" style="left:738.00px;top:41.90px;font-size:4.90px;line-height:5.88px;color:#7a7a7a;transform:scaleX(0.975);">Επιστροφή</div>
<div style="left:648.30px;top:48.80px;width:119.70px;height:391.00px;background:#e7e7e7;"></div>
<div style="left:648.20px;top:49.00px;width:3.40px;height:390.00px;background:#eeeeee;"></div>
<div style="left:651.50px;top:66.00px;width:109.00px;height:10.80px;background:#efefef;"></div>
<div style="left:651.80px;top:190.60px;width:114.70px;height:204.30px;background:#ffffff;"></div>
<div style="left:652.20px;top:190.80px;width:107.80px;height:6.80px;background:#ececec;"></div>
<div style="left:658.60px;top:204.29px;width:101.40px;height:0.35px;background:#ededed;"></div>
<div style="left:658.60px;top:211.08px;width:101.40px;height:0.35px;background:#ededed;"></div>
<div style="left:652.20px;top:211.17px;width:107.80px;height:6.80px;background:#ececec;"></div>
<div style="left:658.60px;top:224.66px;width:101.40px;height:0.35px;background:#ededed;"></div>
<div style="left:658.60px;top:231.45px;width:101.40px;height:0.35px;background:#ededed;"></div>
<div style="left:658.60px;top:238.24px;width:101.40px;height:0.35px;background:#ededed;"></div>
<div style="left:658.60px;top:245.03px;width:101.40px;height:0.35px;background:#ededed;"></div>
<div style="left:652.20px;top:245.12px;width:107.80px;height:6.80px;background:#ececec;"></div>
<div style="left:658.60px;top:258.61px;width:101.40px;height:0.35px;background:#ededed;"></div>
<div style="left:652.20px;top:258.70px;width:107.80px;height:6.80px;background:#ececec;"></div>
<div style="left:658.60px;top:272.19px;width:101.40px;height:0.35px;background:#ededed;"></div>
<div style="left:652.20px;top:272.28px;width:107.80px;height:6.80px;background:#ececec;"></div>
<div style="left:658.60px;top:285.77px;width:101.40px;height:0.35px;background:#ededed;"></div>
<div style="left:658.60px;top:292.56px;width:101.40px;height:0.35px;background:#ededed;"></div>
<div style="left:658.60px;top:299.35px;width:101.40px;height:0.35px;background:#ededed;"></div>
<div style="left:658.60px;top:306.14px;width:101.40px;height:0.35px;background:#ededed;"></div>
<div style="left:652.20px;top:306.23px;width:107.80px;height:6.80px;background:#ececec;"></div>
<div style="left:652.20px;top:313.02px;width:107.80px;height:6.80px;background:#ececec;"></div>
<div style="left:652.20px;top:319.81px;width:20.00px;height:6.80px;background:#ececec;"></div>
<div style="left:658.60px;top:326.51px;width:101.40px;height:0.35px;background:#ededed;"></div>
<div style="left:652.20px;top:326.60px;width:20.00px;height:6.80px;background:#ececec;"></div>
<div style="left:658.60px;top:333.30px;width:101.40px;height:0.35px;background:#ededed;"></div>
<div style="left:652.20px;top:333.39px;width:20.00px;height:6.80px;background:#ececec;"></div>
<div style="left:658.60px;top:340.09px;width:101.40px;height:0.35px;background:#ededed;"></div>
<div style="left:652.20px;top:340.18px;width:20.00px;height:6.80px;background:#ececec;"></div>
<div style="left:658.60px;top:346.88px;width:101.40px;height:0.35px;background:#ededed;"></div>
<div style="left:652.20px;top:346.97px;width:20.00px;height:6.80px;background:#ececec;"></div>
<div style="left:658.60px;top:353.67px;width:101.40px;height:0.35px;background:#ededed;"></div>
<div style="left:652.20px;top:353.76px;width:20.00px;height:6.80px;background:#ececec;"></div>
<div style="left:658.60px;top:360.46px;width:101.40px;height:0.35px;background:#ededed;"></div>
<div style="left:652.20px;top:360.55px;width:20.00px;height:6.80px;background:#ececec;"></div>
<div style="left:658.60px;top:367.25px;width:101.40px;height:0.35px;background:#ededed;"></div>
<div style="left:652.20px;top:367.34px;width:20.00px;height:6.80px;background:#ececec;"></div>
<div style="left:658.60px;top:374.04px;width:101.40px;height:0.35px;background:#ededed;"></div>
<div style="left:652.20px;top:374.13px;width:107.80px;height:6.80px;background:#ececec;"></div>
<div style="left:652.20px;top:380.92px;width:20.00px;height:6.80px;background:#ececec;"></div>
<div style="left:658.60px;top:387.62px;width:101.40px;height:0.35px;background:#ededed;"></div>
<div style="left:652.20px;top:387.71px;width:20.00px;height:6.80px;background:#ececec;"></div>
<div style="left:658.60px;top:394.41px;width:101.40px;height:0.35px;background:#ededed;"></div>
<div style="left:709.70px;top:197.60px;width:0.35px;height:197.00px;background:#ececec;"></div>
<div style="left:651.80px;top:427.00px;width:116.00px;height:11.50px;background:#f0f0f0;"></div>
<svg width="768" height="448" viewBox="0 0 768 448"><path d="M762.6,53.2l1.6,1.6M764.2,53.2l-1.6,1.6" stroke="#666" stroke-width="0.5"/><path d="M656.4,68.4l2.4,3.4l0.2,-1.6l1.6,0z" fill="#222"/><rect x="659" y="70" width="4" height="3.2" fill="#555"/><rect x="660" y="70.8" width="2" height="1.6" fill="#ddd"/><rect x="668.3" y="68.7" width="45.7" height="7.3" fill="#fff" stroke="#d0d0d0" stroke-width="0.5"/><path d="M710.3,72l0.9,1.1l0.9,-1.1z" fill="#555"/><circle cx="735" cy="72" r="2.7" fill="#7fa8d8" stroke="#3f5f8f" stroke-width="0.5"/><rect x="733.8" y="70.6" width="2.4" height="3.6" fill="#e9edf3"/><rect x="740.40" y="69.20" width="4.20" height="3.74" fill="#e8eef8" opacity="0.85"/><rect x="742.08" y="70.76" width="3.92" height="3.64" fill="#45628f" opacity="0.8"/><rect x="750.8" y="67.4" width="9" height="9" fill="#cbcbcb"/><path d="M752.4,70.4l3,-1.2h2.6v4.6l-3,1.2h-2.6z" fill="#2a3a5a"/><rect x="754" y="71" width="2.6" height="2.4" fill="#cfe0f8"/><path d="M762.6,69.6h1.8" stroke="#777" stroke-width="0.5"/><rect x="651.8" y="78.6" width="114.7" height="109.8" fill="#fff" stroke="#9a9a9a" stroke-width="0.7"/><path d="M669.5,145.5V131.8H714.5V99L750,108L714.5,168.5H669.5V152" fill="none" stroke="#f050e0" stroke-width="0.6" stroke-dasharray="0.8,1.1"/><circle cx="670.2" cy="151" r="1.3" fill="#ff1010"/><circle cx="670.4" cy="145.8" r="1.1" fill="#ff9a2a"/><path d="M654.40,195.40l2.1,0l0,-2.1z" fill="#6e6e6e"/><path d="M654.40,215.77l2.1,0l0,-2.1z" fill="#6e6e6e"/><path d="M654.40,249.72l2.1,0l0,-2.1z" fill="#6e6e6e"/><path d="M654.40,263.30l2.1,0l0,-2.1z" fill="#6e6e6e"/><path d="M654.40,276.88l2.1,0l0,-2.1z" fill="#6e6e6e"/><path d="M654.40,310.83l2.1,0l0,-2.1z" fill="#6e6e6e"/><path d="M661.40,317.62l2.1,0l0,-2.1z" fill="#6e6e6e"/><path d="M667.80,324.41l2.1,0l0,-2.1z" fill="#6e6e6e"/><path d="M667.80,351.57l2.1,0l0,-2.1z" fill="#6e6e6e"/><path d="M661.40,378.73l2.1,0l0,-2.1z" fill="#6e6e6e"/><path d="M667.80,385.52l2.1,0l0,-2.1z" fill="#6e6e6e"/><rect x="753.6" y="266.2" width="6" height="5.6" fill="#ececec" stroke="#c4c4c4" stroke-width="0.4"/><rect x="765.8" y="197.3" width="0.9" height="143" fill="#a6a6a6"/><path d="M697,425.6h24" stroke="#b8b8b8" stroke-width="0.6" stroke-dasharray="0.6,0.9"/><rect x="655.2" y="430" width="5.8" height="5.8" rx="1" fill="#44566a"/><path d="M655.2,431.8h5.8M655.2,433.8h5.8" stroke="#c8d4e0" stroke-width="0.5"/><rect x="665.8" y="430.2" width="5.6" height="5.4" fill="#f2f2f2" stroke="#333" stroke-width="0.6"/><rect x="668" y="430.4" width="2.6" height="2.2" fill="#2fa04a"/><path d="M666.6,433.6h4" stroke="#333" stroke-width="0.5"/><rect x="676.2" y="430.2" width="5.6" height="5.4" fill="#f2f2f2" stroke="#333" stroke-width="0.6"/><rect x="678.8" y="430.6" width="2.4" height="2.2" fill="#2fa04a"/><rect x="677.2" y="432.6" width="2.2" height="2.2" fill="#d03030"/><path d="M686.8,430.2v5.4h5.8" stroke="#333" stroke-width="0.6" fill="none"/><path d="M687.6,434.4l1.6,-2.4l1.4,1.4l1.6,-2.6" stroke="#9040a0" stroke-width="0.6" fill="none"/><rect x="690.4" y="430.2" width="2" height="1.2" fill="#333"/><path d="M697,430v5.8h6" stroke="#333" stroke-width="0.5" fill="none"/><rect x="697.8" y="431.4" width="1.5" height="4.2" fill="#d03030"/><rect x="699.6" y="433" width="1.5" height="2.6" fill="#30a040"/><rect x="701.4" y="432.2" width="1.5" height="3.4" fill="#3060d0"/><path d="M709.4,430l2.6,0.6l0.4,3l-3.4,0.4z" fill="#c8501e"/><path d="M707.4,435.6l1.8,-2l3.4,0.2l0.8,1.8z" fill="#5a2a1a"/><rect x="718" y="430" width="5.8" height="2.4" fill="#4a5ac0"/><rect x="718" y="432.8" width="1.6" height="2.8" fill="#e03030"/><rect x="719.9" y="432.8" width="1.6" height="2.8" fill="#f0c020"/><rect x="721.8" y="432.8" width="1.8" height="2.8" fill="#e040c0"/><rect x="728.6" y="430" width="4.8" height="5.8" fill="#f4f6fa" stroke="#8898b0" stroke-width="0.5"/><rect x="729.6" y="433" width="2.8" height="2.4" fill="#5080d0"/><rect x="739.2" y="430" width="4.8" height="5.8" rx="0.6" fill="#fff" stroke="#9a4a3a" stroke-width="0.6"/><rect x="749.2" y="430.2" width="5.6" height="5.4" fill="#d8d8e4" stroke="#2a2a3a" stroke-width="0.7"/><rect x="752" y="432.4" width="2.8" height="3.2" fill="#2a2a3a"/><path d="M762,430.6l1,1l1,-1M762,433.4h2M762,435.2h2" stroke="#777" stroke-width="0.45" fill="none"/></svg>
<div class="t" style="left:653.00px;top:54.42px;font-size:8.70px;line-height:10.44px;color:#5e5e5e;transform:scaleX(0.972);text-shadow:none;">Επιλεγμένα Στοιχεία</div>
<div class="t" style="left:670.00px;top:70.24px;font-size:4.50px;line-height:5.40px;color:#444;transform:scaleX(0.955);">1 Μάκρο-Περιοχές</div>
<div class="t" style="left:720.40px;top:69.47px;font-size:3.60px;line-height:4.32px;color:#222;font-weight:bold;">img</div>
<div class="t" style="left:660.00px;top:191.90px;font-size:4.80px;line-height:5.76px;color:#333;font-weight:bold;transform:scaleX(1.060);">Όνομα - Στάθμη - Σχέδιο</div>
<div class="t" style="left:660.00px;top:198.69px;font-size:4.80px;line-height:5.76px;color:#484848;transform:scaleX(0.930);">Όνομα</div>
<div class="t" style="left:711.20px;top:198.69px;font-size:4.80px;line-height:5.76px;color:#484848;transform:scaleX(0.930);">A34</div>
<div class="t" style="left:660.00px;top:205.48px;font-size:4.80px;line-height:5.76px;color:#b4b4b4;transform:scaleX(0.930);">Στάθμη</div>
<div class="t" style="left:711.20px;top:205.48px;font-size:4.80px;line-height:5.76px;color:#b4b4b4;transform:scaleX(0.930);">Σ1</div>
<div class="t" style="left:660.00px;top:212.27px;font-size:4.80px;line-height:5.76px;color:#333;font-weight:bold;transform:scaleX(1.060);">Είδος Περιγράμματος</div>
<div class="t" style="left:660.00px;top:219.06px;font-size:4.80px;line-height:5.76px;color:#484848;transform:scaleX(0.930);">Είδος</div>
<div class="t" style="left:711.20px;top:219.06px;font-size:4.80px;line-height:5.76px;color:#484848;transform:scaleX(0.930);">Επιφάνεια</div>
<div class="t" style="left:660.00px;top:225.85px;font-size:4.80px;line-height:5.76px;color:#484848;transform:scaleX(0.930);">Γωνία Τοπικού Συστή...</div>
<div class="t" style="left:711.20px;top:225.85px;font-size:4.80px;line-height:5.76px;color:#484848;transform:scaleX(0.930);">0.0 °</div>
<div class="t" style="left:660.00px;top:232.64px;font-size:4.80px;line-height:5.76px;color:#484848;transform:scaleX(0.930);">Υλικό</div>
<div class="t" style="left:711.20px;top:232.64px;font-size:4.80px;line-height:5.76px;color:#484848;transform:scaleX(0.930);">C25/30</div>
<div class="t" style="left:660.00px;top:239.43px;font-size:4.80px;line-height:5.76px;color:#484848;transform:scaleX(0.930);">Ποιότητα Χάλυβα Οπλ...</div>
<div class="t" style="left:711.20px;top:239.43px;font-size:4.80px;line-height:5.76px;color:#484848;transform:scaleX(0.930);">B500C</div>
<div class="t" style="left:660.00px;top:246.22px;font-size:4.80px;line-height:5.76px;color:#333;font-weight:bold;transform:scaleX(1.060);">Πύκνωση Πλέγματος</div>
<div class="t" style="left:660.00px;top:253.01px;font-size:4.80px;line-height:5.76px;color:#484848;transform:scaleX(0.930);">w=</div>
<div class="t" style="left:711.20px;top:253.01px;font-size:4.80px;line-height:5.76px;color:#484848;transform:scaleX(0.930);">-</div>
<div class="t" style="left:660.00px;top:259.80px;font-size:4.80px;line-height:5.76px;color:#333;font-weight:bold;transform:scaleX(1.060);">Στοιχείο Ελέγχου Λειτουργικότητας</div>
<div class="t" style="left:660.00px;top:266.59px;font-size:4.80px;line-height:5.76px;color:#484848;transform:scaleX(0.930);">Επιλογή στοιχείου ελέ...</div>
<div class="t" style="left:711.20px;top:266.59px;font-size:4.80px;line-height:5.76px;color:#484848;transform:scaleX(0.930);">301</div>
<div class="t" style="left:660.00px;top:273.38px;font-size:4.80px;line-height:5.76px;color:#333;font-weight:bold;transform:scaleX(1.060);">Γεωμετρία - Επικαλύψεις</div>
<div class="t" style="left:660.00px;top:280.17px;font-size:4.80px;line-height:5.76px;color:#484848;transform:scaleX(0.930);">Πάχος</div>
<div class="t" style="left:711.20px;top:280.17px;font-size:4.80px;line-height:5.76px;color:#484848;transform:scaleX(0.930);">18.0 cm</div>
<div class="t" style="left:660.00px;top:286.96px;font-size:4.80px;line-height:5.76px;color:#484848;transform:scaleX(0.930);">Επικάλυψη Πάνω cπ</div>
<div class="t" style="left:711.20px;top:286.96px;font-size:4.80px;line-height:5.76px;color:#484848;transform:scaleX(0.930);">1.0 cm</div>
<div class="t" style="left:660.00px;top:293.75px;font-size:4.80px;line-height:5.76px;color:#484848;transform:scaleX(0.930);">Επικάλυψη Κάτω cκ</div>
<div class="t" style="left:711.20px;top:293.75px;font-size:4.80px;line-height:5.76px;color:#484848;transform:scaleX(0.930);">3.0 cm</div>
<div class="t" style="left:660.00px;top:300.54px;font-size:4.80px;line-height:5.76px;color:#484848;transform:scaleX(0.930);">Επιφάνεια</div>
<div class="t" style="left:711.20px;top:300.54px;font-size:4.80px;line-height:5.76px;color:#484848;transform:scaleX(0.930);">50.04 m²</div>
<div class="t" style="left:660.00px;top:307.33px;font-size:4.80px;line-height:5.76px;color:#333;font-weight:bold;transform:scaleX(1.060);">Οπλισμός</div>
<div class="t" style="left:667.00px;top:314.12px;font-size:4.80px;line-height:5.76px;color:#333;font-weight:bold;transform:scaleX(1.060);">Πάνω</div>
<div class="t" style="left:673.60px;top:320.91px;font-size:4.80px;line-height:5.76px;color:#484848;transform:scaleX(0.930);">Διεύθυνση 1</div>
<div class="t" style="left:711.20px;top:320.91px;font-size:4.80px;line-height:5.76px;color:#484848;transform:scaleX(0.930);">Φ10/15/5.23 cm²/m</div>
<div class="t" style="left:680.00px;top:327.70px;font-size:4.80px;line-height:5.76px;color:#484848;transform:scaleX(0.930);">Ράβδοι:</div>
<div class="t" style="left:711.20px;top:327.70px;font-size:4.80px;line-height:5.76px;color:#484848;transform:scaleX(0.930);">Φ10</div>
<div class="t" style="left:680.00px;top:334.49px;font-size:4.80px;line-height:5.76px;color:#484848;transform:scaleX(0.930);">Απόσταση:</div>
<div class="t" style="left:711.20px;top:334.49px;font-size:4.80px;line-height:5.76px;color:#484848;transform:scaleX(0.930);">15</div>
<div class="t" style="left:680.00px;top:341.28px;font-size:4.80px;line-height:5.76px;color:#b4b4b4;transform:scaleX(0.930);">Επιφάνεια ...</div>
<div class="t" style="left:711.20px;top:341.28px;font-size:4.80px;line-height:5.76px;color:#b4b4b4;transform:scaleX(0.930);">5.23 cm²/m</div>
<div class="t" style="left:673.60px;top:348.07px;font-size:4.80px;line-height:5.76px;color:#484848;transform:scaleX(0.930);">Διεύθυνση 2</div>
<div class="t" style="left:711.20px;top:348.07px;font-size:4.80px;line-height:5.76px;color:#484848;transform:scaleX(0.930);">Φ10/10/7.85 cm²/m</div>
<div class="t" style="left:680.00px;top:354.86px;font-size:4.80px;line-height:5.76px;color:#484848;transform:scaleX(0.930);">Ράβδοι:</div>
<div class="t" style="left:711.20px;top:354.86px;font-size:4.80px;line-height:5.76px;color:#484848;transform:scaleX(0.930);">Φ10</div>
<div class="t" style="left:680.00px;top:361.65px;font-size:4.80px;line-height:5.76px;color:#484848;transform:scaleX(0.930);">Απόσταση:</div>
<div class="t" style="left:711.20px;top:361.65px;font-size:4.80px;line-height:5.76px;color:#484848;transform:scaleX(0.930);">10</div>
<div class="t" style="left:680.00px;top:368.44px;font-size:4.80px;line-height:5.76px;color:#b4b4b4;transform:scaleX(0.930);">Επιφάνεια ...</div>
<div class="t" style="left:711.20px;top:368.44px;font-size:4.80px;line-height:5.76px;color:#b4b4b4;transform:scaleX(0.930);">7.85 cm²/m</div>
<div class="t" style="left:667.00px;top:375.23px;font-size:4.80px;line-height:5.76px;color:#333;font-weight:bold;transform:scaleX(1.060);">Κάτω</div>
<div class="t" style="left:673.60px;top:382.02px;font-size:4.80px;line-height:5.76px;color:#484848;transform:scaleX(0.930);">Διεύθυνση 1</div>
<div class="t" style="left:711.20px;top:382.02px;font-size:4.80px;line-height:5.76px;color:#484848;transform:scaleX(0.930);">Φ10/15/5.23 cm²/m</div>
<div class="t" style="left:680.00px;top:388.81px;font-size:4.80px;line-height:5.76px;color:#484848;transform:scaleX(0.930);">Ράβδοι:</div>
<div class="t" style="left:711.20px;top:388.81px;font-size:4.80px;line-height:5.76px;color:#484848;transform:scaleX(0.930);">Φ10</div>
<div style="left:115.50px;top:305.50px;width:533.00px;height:133.50px;background:#e7e7e7;"></div>
<div style="left:115.50px;top:324.50px;width:533.00px;height:9.00px;background:#efefef;"></div>
<div style="left:117.00px;top:333.50px;width:531.00px;height:83.80px;background:#ffffff;"></div>
<div style="left:115.50px;top:417.30px;width:533.00px;height:12.70px;background:#ebebeb;"></div>
<div style="left:115.50px;top:430.00px;width:533.00px;height:0.50px;background:#d4d4d4;"></div>
<div style="left:178.40px;top:325.40px;width:11.60px;height:7.40px;background:#cbcbcb;"></div>
<div style="left:123.00px;top:334.70px;width:518.00px;height:6.60px;background:#efefef;"></div>
<div style="left:123.00px;top:348.17px;width:518.00px;height:0.35px;background:#f1f1f1;"></div>
<div style="left:123.00px;top:348.44px;width:518.00px;height:6.60px;background:#efefef;"></div>
<div style="left:123.00px;top:355.31px;width:518.00px;height:6.60px;background:#efefef;"></div>
<div style="left:123.00px;top:368.78px;width:518.00px;height:0.35px;background:#f1f1f1;"></div>
<div style="left:123.00px;top:375.65px;width:518.00px;height:0.35px;background:#f1f1f1;"></div>
<div style="left:123.00px;top:382.52px;width:518.00px;height:0.35px;background:#f1f1f1;"></div>
<div style="left:123.00px;top:389.39px;width:518.00px;height:0.35px;background:#f1f1f1;"></div>
<div style="left:123.00px;top:389.66px;width:518.00px;height:6.60px;background:#efefef;"></div>
<div style="left:123.00px;top:403.13px;width:518.00px;height:0.35px;background:#f1f1f1;"></div>
<div style="left:123.00px;top:410.00px;width:518.00px;height:0.35px;background:#f1f1f1;"></div>
<div style="left:123.00px;top:416.87px;width:518.00px;height:0.35px;background:#f1f1f1;"></div>
<div style="left:154.80px;top:430.50px;width:58.40px;height:8.50px;background:#f8f8f8;"></div>
<svg width="768" height="448" viewBox="0 0 768 448"><path d="M627.10,316.10l1.6,1.8l1.6,-1.8z" fill="#5a5a5a"/><path d="M635.95,314.50h1.7v2.3h-1.7zM635.35,316.80h2.9M636.80,316.80v1.6" stroke="#5a5a5a" stroke-width="0.5" fill="none"/><path d="M643.35,315.45l2.5,2.5M645.85,315.45l-2.5,2.5" stroke="#5a5a5a" stroke-width="0.6" fill="none"/><path d="M118.60,339.20l2.1,0l0,-2.1z" fill="#6e6e6e"/><path d="M118.60,352.94l2.1,0l0,-2.1z" fill="#6e6e6e"/><path d="M124.80,359.81l2.1,0l0,-2.1z" fill="#6e6e6e"/><path d="M124.80,394.16l2.1,0l0,-2.1z" fill="#6e6e6e"/><rect x="646" y="342.5" width="0.9" height="28.5" fill="#a6a6a6"/><rect x="118.4" y="432" width="3.6" height="4.8" fill="#fff" stroke="#6a5a2a" stroke-width="0.5"/><rect x="157.0" y="432.0" width="5.6" height="5" fill="#fff" stroke="#9ab0d0" stroke-width="0.4"/><rect x="157.0" y="432.0" width="5.6" height="1.3" fill="#5f8fd8"/><rect x="160.9" y="434.6" width="1.3" height="2.8" fill="#c03030"/><rect x="216.4" y="432.0" width="5.6" height="5" fill="#fff" stroke="#9ab0d0" stroke-width="0.4"/><rect x="216.4" y="432.0" width="5.6" height="1.3" fill="#5f8fd8"/><rect x="220.3" y="434.6" width="1.3" height="2.8" fill="#c03030"/><path d="M276.2,436.4v-2.2l2.4,-2l2.4,2v2.2z" fill="#f4d890" stroke="#a07a2a" stroke-width="0.4"/></svg>
<div class="t" style="left:117.70px;top:312.72px;font-size:8.70px;line-height:10.44px;color:#5e5e5e;transform:scaleX(0.974);text-shadow:none;">Παράθυρο Εργασίας 1</div>
<div class="t" style="left:119.60px;top:326.84px;font-size:4.50px;line-height:5.40px;color:#555;transform:scaleX(1.084);">Επιλεγμένα</div>
<div class="t" style="left:148.00px;top:326.84px;font-size:4.50px;line-height:5.40px;color:#555;transform:scaleX(1.075);">Εικονιζόμενα</div>
<div class="t" style="left:180.20px;top:326.84px;font-size:4.50px;line-height:5.40px;color:#444;transform:scaleX(1.016);">Όλα</div>
<div class="t" style="left:124.40px;top:335.70px;font-size:4.80px;line-height:5.76px;color:#333;font-weight:bold;">Πλάκες Π/Σ</div>
<div class="t" style="left:124.40px;top:342.57px;font-size:4.80px;line-height:5.76px;color:#484848;transform:scaleX(0.960);">Οπλισμός για τους Ελέγχους Διάτμησης, Διάτρησης &amp; Λειτουργικότητας</div>
<div class="t" style="left:330.80px;top:342.57px;font-size:4.80px;line-height:5.76px;color:#484848;transform:scaleX(0.960);">Τοποθετούμενος Οπλισμός - As,un</div>
<div class="t" style="left:124.40px;top:349.44px;font-size:4.80px;line-height:5.76px;color:#333;font-weight:bold;">Έλεγχος Λειτουργικότητας</div>
<div class="t" style="left:131.50px;top:356.31px;font-size:4.80px;line-height:5.76px;color:#333;font-weight:bold;">Βασικές Παράμετροι</div>
<div class="t" style="left:131.40px;top:363.18px;font-size:4.80px;line-height:5.76px;color:#484848;transform:scaleX(0.960);">Συνδυασμός Φόρτισης</div>
<div class="t" style="left:330.80px;top:363.18px;font-size:4.80px;line-height:5.76px;color:#484848;transform:scaleX(0.960);">G+ψ2·Q</div>
<div class="t" style="left:131.40px;top:370.05px;font-size:4.80px;line-height:5.76px;color:#484848;transform:scaleX(0.960);">Συντελεστής β =</div>
<div class="t" style="left:330.80px;top:370.05px;font-size:4.80px;line-height:5.76px;color:#484848;transform:scaleX(0.960);">0.50</div>
<div class="t" style="left:131.40px;top:376.92px;font-size:4.80px;line-height:5.76px;color:#484848;transform:scaleX(0.960);">Όριο συνολικής παραμόρφωσης</div>
<div class="t" style="left:330.80px;top:376.92px;font-size:4.80px;line-height:5.76px;color:#484848;transform:scaleX(0.960);">L/ 250</div>
<div class="t" style="left:131.40px;top:383.79px;font-size:4.80px;line-height:5.76px;color:#484848;transform:scaleX(0.960);">Όριο πρόσθετης παραμόρφωσης</div>
<div class="t" style="left:330.80px;top:383.79px;font-size:4.80px;line-height:5.76px;color:#484848;transform:scaleX(0.960);">L/ 500</div>
<div class="t" style="left:131.50px;top:390.66px;font-size:4.80px;line-height:5.76px;color:#333;font-weight:bold;">Παράμετροι Ερπυσμού - Συστολής Ξήρανσης</div>
<div class="t" style="left:131.40px;top:397.53px;font-size:4.80px;line-height:5.76px;color:#484848;transform:scaleX(0.960);">Κατηγορία Τσιμέντου</div>
<div class="t" style="left:330.80px;top:397.53px;font-size:4.80px;line-height:5.76px;color:#484848;transform:scaleX(0.960);">Κατηγορία N</div>
<div class="t" style="left:131.40px;top:404.40px;font-size:4.80px;line-height:5.76px;color:#484848;transform:scaleX(0.960);">Ποσοστό Υγρασίας RH =</div>
<div class="t" style="left:330.80px;top:404.40px;font-size:4.80px;line-height:5.76px;color:#484848;transform:scaleX(0.960);">50 %</div>
<div class="t" style="left:131.40px;top:411.27px;font-size:4.80px;line-height:5.76px;color:#484848;transform:scaleX(0.960);">Ηλικία του σκυροδέματος κατά την επιβολή της φόρτισης σε ημέρες t0=</div>
<div class="t" style="left:330.80px;top:411.27px;font-size:4.80px;line-height:5.76px;color:#484848;transform:scaleX(0.960);">7 ημέρες</div>
<div class="t" style="left:124.60px;top:432.64px;font-size:4.50px;line-height:5.40px;color:#555;transform:scaleX(1.033);">Εμφ. Αποτελ.</div>
<div class="t" style="left:164.20px;top:432.64px;font-size:4.50px;line-height:5.40px;color:#444;transform:scaleX(1.040);">Παράθυρο Εργασίας 1</div>
<div class="t" style="left:223.80px;top:432.64px;font-size:4.50px;line-height:5.40px;color:#555;transform:scaleX(1.044);">Παράθυρο Εργασίας 2</div>
<div class="t" style="left:283.20px;top:432.64px;font-size:4.50px;line-height:5.40px;color:#555;transform:scaleX(1.018);">Βοήθεια</div>
<div style="left:0.00px;top:64.00px;width:115.40px;height:23.00px;background:#efefef;"></div>
<div style="left:1.20px;top:87.00px;width:112.20px;height:137.00px;background:#ffffff;"></div>
<div style="left:0.00px;top:224.00px;width:115.40px;height:10.40px;background:#f0f0f0;"></div>
<div style="left:0.00px;top:234.40px;width:115.40px;height:0.50px;background:#d9d9d9;"></div>
<div style="left:1.00px;top:235.00px;width:30.50px;height:8.60px;background:#f7f7f7;"></div>
<div style="left:0.00px;top:244.20px;width:115.40px;height:0.60px;background:#f6f6f6;"></div>
<div style="left:41.00px;top:156.00px;width:63.50px;height:6.60px;background:#efefef;"></div>
<svg width="768" height="448" viewBox="0 0 768 448"><path d="M91.90,56.60l1.6,1.8l1.6,-1.8z" fill="#5a5a5a"/><path d="M100.65,55.00h1.7v2.3h-1.7zM100.05,57.30h2.9M101.50,57.30v1.6" stroke="#5a5a5a" stroke-width="0.5" fill="none"/><path d="M107.75,55.95l2.5,2.5M110.25,55.95l-2.5,2.5" stroke="#5a5a5a" stroke-width="0.6" fill="none"/><rect x="4.6" y="66.4" width="25.6" height="8" fill="#fff" stroke="#d0d0d0" stroke-width="0.5"/><path d="M26.6,70l0.9,1.1l0.9,-1.1z" fill="#555"/><path d="M33.6,70.6l2.4,-2.6l2.4,2.6l-1,0l0,2.2l-2.8,0l0,-2.2z" fill="#9cc0ee" stroke="#6f9fdc" stroke-width="0.3"/><path d="M42.2,70.3l2.4,2.8l2.4,-2.8l-1,0l0,-2.4l-2.8,0l0,2.4z" fill="#2f7be0"/><rect x="54.2" y="66.8" width="5.6" height="4.4" fill="#f4f7fb" stroke="#5a7aa6" stroke-width="0.6"/><path d="M58.6,71.2l1.6,1.8" stroke="#d89030" stroke-width="0.9"/><rect x="63.6" y="67" width="5" height="5.6" rx="1.6" fill="#9ab6dc" stroke="#4a6a9a" stroke-width="0.5"/><path d="M66.1,67v5.6M63.6,69.8h5" stroke="#e8eef6" stroke-width="0.5"/><path d="M68,72l1.4,1.2" stroke="#d89030" stroke-width="0.8"/><rect x="72.4" y="66.8" width="4" height="3.4" fill="#4f86d8"/><rect x="73.8" y="68.6" width="4" height="3.2" fill="#cfe0f6" stroke="#5a7aa6" stroke-width="0.4"/><path d="M77,71.8l1.4,1.4" stroke="#d89030" stroke-width="0.8"/><path d="M4.5,78.5l4,-1.2l2.2,1v4.6l-4,1.2l-2.2,-1z" fill="#a9c6ea" stroke="#86a8d6" stroke-width="0.3"/><rect x="12.6" y="77" width="7.2" height="7.4" fill="#d6d6d6"/><path d="M13.5,79l3,-1h2.4v4.4l-3,1h-2.4z" fill="#2a2a2a"/><rect x="15" y="79.6" width="2.4" height="2.4" fill="#e8e8e8"/><path d="M22,79.2l2.6,-1.6l3.2,0.6l1,2.2l-0.6,3l-3.2,1l-3,-1.4z" fill="#1e8ff0"/><path d="M32.4,79.2l3.4,-1.6l2.6,1.2v4l-3.4,1.6l-2.6,-1.2z" fill="#3f79c8"/><rect x="34.2" y="79.6" width="2.2" height="2.2" fill="#f0f4fa"/><path d="M40.6,80.6h1.6" stroke="#555" stroke-width="0.5"/><rect x="47.8" y="76.8" width="8" height="7.8" fill="#cfcfcf"/><path d="M49,83.5v-3.4q1.4,-2.4 2.8,0q1.4,-2.4 2.8,0v3.4z" fill="#3f8f5f"/><path d="M50.4,80.4v3M53.2,80.4v3" stroke="#cfe0f4" stroke-width="0.7"/><path d="M59,83.5v-3.4q1.4,-2.4 2.8,0q1.4,-2.4 2.8,0v3.4z" fill="#f4ece8" stroke="#d9a89a" stroke-width="0.45"/><path d="M67.2,83.5v-3.4q1.4,-2.4 2.8,0q1.4,-2.4 2.8,0v3.4z" fill="#4a4a4a"/><path d="M75.6,83.5v-3.4q1.4,-2.4 2.8,0q1.4,-2.4 2.8,0v3.4z" fill="#1f8a3a"/><path d="M76,82.5h5.2" stroke="#2a6fd0" stroke-width="0.9"/><path d="M9.40,89.30l1.7,1.6l-1.7,1.6z" fill="none" stroke="#a8a8a8" stroke-width="0.4"/><rect x="15.30" y="88.85" width="4.10" height="4.10" fill="#fff" stroke="#b4b4b4" stroke-width="0.45"/><path d="M16.00,90.90l1.02,1.15l1.84,-2.25" stroke="#5a5a5a" stroke-width="0.55" fill="none"/><path d="M23.90,93.00l4.2,-4.2" stroke="#e03030" stroke-width="0.7"/><circle cx="24.10" cy="92.90" r="0.6" fill="#3060d0"/><path d="M9.00,98.94l2.1,0l0,-2.1z" fill="#6e6e6e"/><rect x="15.30" y="95.69" width="4.10" height="4.10" fill="#fff" stroke="#b4b4b4" stroke-width="0.45"/><path d="M16.00,97.74l1.02,1.15l1.84,-2.25" stroke="#5a5a5a" stroke-width="0.55" fill="none"/><rect x="23.10" y="95.14" width="5.2" height="5.2" fill="#ff4a14"/><circle cx="25.70" cy="97.74" r="1.9" fill="#5fd040"/><circle cx="25.70" cy="97.74" r="1.2" fill="#1a5fd6"/><path d="M16.80,102.98l1.7,1.6l-1.7,1.6z" fill="none" stroke="#a8a8a8" stroke-width="0.4"/><rect x="22.50" y="102.53" width="4.10" height="4.10" fill="#fff" stroke="#b4b4b4" stroke-width="0.45"/><path d="M30.00,101.88h2.3l1.4,1.4v3.9h-3.7z" fill="#fff" stroke="#4c4c4c" stroke-width="0.5"/><path d="M32.30,101.88v1.4h1.4" fill="none" stroke="#4c4c4c" stroke-width="0.4"/><path d="M16.80,109.82l1.7,1.6l-1.7,1.6z" fill="none" stroke="#a8a8a8" stroke-width="0.4"/><rect x="22.50" y="109.37" width="4.10" height="4.10" fill="#fff" stroke="#b4b4b4" stroke-width="0.45"/><path d="M23.20,111.42l1.02,1.15l1.84,-2.25" stroke="#5a5a5a" stroke-width="0.55" fill="none"/><path d="M30.00,108.72h2.3l1.4,1.4v3.9h-3.7z" fill="#fff" stroke="#4c4c4c" stroke-width="0.5"/><path d="M32.30,108.72v1.4h1.4" fill="none" stroke="#4c4c4c" stroke-width="0.4"/><path d="M16.80,116.66l1.7,1.6l-1.7,1.6z" fill="none" stroke="#a8a8a8" stroke-width="0.4"/><rect x="22.50" y="116.21" width="4.10" height="4.10" fill="#fff" stroke="#b4b4b4" stroke-width="0.45"/><path d="M30.00,115.56h2.3l1.4,1.4v3.9h-3.7z" fill="#fff" stroke="#4c4c4c" stroke-width="0.5"/><path d="M32.30,115.56v1.4h1.4" fill="none" stroke="#4c4c4c" stroke-width="0.4"/><path d="M16.40,126.30l2.1,0l0,-2.1z" fill="#6e6e6e"/><rect x="22.50" y="123.05" width="4.10" height="4.10" fill="#fff" stroke="#b4b4b4" stroke-width="0.45"/><path d="M23.20,125.10l1.02,1.15l1.84,-2.25" stroke="#5a5a5a" stroke-width="0.55" fill="none"/><path d="M30.00,122.40h2.3l1.4,1.4v3.9h-3.7z" fill="#fff" stroke="#4c4c4c" stroke-width="0.5"/><path d="M32.30,122.40v1.4h1.4" fill="none" stroke="#4c4c4c" stroke-width="0.4"/><rect x="29.20" y="129.89" width="4.10" height="4.10" fill="#fff" stroke="#b4b4b4" stroke-width="0.45"/><path d="M38.60,129.94h3.4M40.30,129.94v4.2" stroke="#2f7fd0" stroke-width="0.75" fill="none"/><path d="M24.00,137.18l1.7,1.6l-1.7,1.6z" fill="none" stroke="#a8a8a8" stroke-width="0.4"/><rect x="29.20" y="136.73" width="4.10" height="4.10" fill="#fff" stroke="#b4b4b4" stroke-width="0.45"/><path d="M37.20,136.08h2.3l1.4,1.4v3.9h-3.7z" fill="#fff" stroke="#4c4c4c" stroke-width="0.5"/><path d="M39.50,136.08v1.4h1.4" fill="none" stroke="#4c4c4c" stroke-width="0.4"/><path d="M16.40,146.82l2.1,0l0,-2.1z" fill="#6e6e6e"/><rect x="22.50" y="143.57" width="4.10" height="4.10" fill="#fff" stroke="#b4b4b4" stroke-width="0.45"/><path d="M23.20,145.62l1.02,1.15l1.84,-2.25" stroke="#5a5a5a" stroke-width="0.55" fill="none"/><path d="M30.00,142.92h2.3l1.4,1.4v3.9h-3.7z" fill="#fff" stroke="#4c4c4c" stroke-width="0.5"/><path d="M32.30,142.92v1.4h1.4" fill="none" stroke="#4c4c4c" stroke-width="0.4"/><rect x="29.20" y="150.41" width="4.10" height="4.10" fill="#fff" stroke="#b4b4b4" stroke-width="0.45"/><path d="M38.60,150.46h3.4M40.30,150.46v4.2" stroke="#2f7fd0" stroke-width="0.75" fill="none"/><rect x="29.20" y="157.25" width="4.10" height="4.10" fill="#fff" stroke="#b4b4b4" stroke-width="0.45"/><path d="M38.60,157.30h3.4M40.30,157.30v4.2" stroke="#2f7fd0" stroke-width="0.75" fill="none"/><rect x="29.20" y="164.09" width="4.10" height="4.10" fill="#fff" stroke="#b4b4b4" stroke-width="0.45"/><path d="M29.90,166.14l1.02,1.15l1.84,-2.25" stroke="#5a5a5a" stroke-width="0.55" fill="none"/><path d="M38.60,164.14h3.4M40.30,164.14v4.2" stroke="#2f7fd0" stroke-width="0.75" fill="none"/><rect x="29.20" y="170.93" width="4.10" height="4.10" fill="#fff" stroke="#b4b4b4" stroke-width="0.45"/><path d="M29.90,172.98l1.02,1.15l1.84,-2.25" stroke="#5a5a5a" stroke-width="0.55" fill="none"/><path d="M38.60,170.98h3.4M40.30,170.98v4.2" stroke="#2f7fd0" stroke-width="0.75" fill="none"/><path d="M16.80,178.22l1.7,1.6l-1.7,1.6z" fill="none" stroke="#a8a8a8" stroke-width="0.4"/><rect x="22.50" y="177.77" width="4.10" height="4.10" fill="#fff" stroke="#b4b4b4" stroke-width="0.45"/><path d="M23.20,179.82l1.02,1.15l1.84,-2.25" stroke="#5a5a5a" stroke-width="0.55" fill="none"/><path d="M30.00,177.12h2.3l1.4,1.4v3.9h-3.7z" fill="#fff" stroke="#4c4c4c" stroke-width="0.5"/><path d="M32.30,177.12v1.4h1.4" fill="none" stroke="#4c4c4c" stroke-width="0.4"/><path d="M16.80,185.06l1.7,1.6l-1.7,1.6z" fill="none" stroke="#a8a8a8" stroke-width="0.4"/><rect x="22.50" y="184.61" width="4.10" height="4.10" fill="#fff" stroke="#b4b4b4" stroke-width="0.45"/><path d="M30.00,183.96h2.3l1.4,1.4v3.9h-3.7z" fill="#fff" stroke="#4c4c4c" stroke-width="0.5"/><path d="M32.30,183.96v1.4h1.4" fill="none" stroke="#4c4c4c" stroke-width="0.4"/><rect x="22.50" y="191.45" width="4.10" height="4.10" fill="#fff" stroke="#b4b4b4" stroke-width="0.45"/><path d="M23.20,193.50l1.02,1.15l1.84,-2.25" stroke="#5a5a5a" stroke-width="0.55" fill="none"/><path d="M30.00,190.80h2.3l1.4,1.4v3.9h-3.7z" fill="#fff" stroke="#4c4c4c" stroke-width="0.5"/><path d="M32.30,190.80v1.4h1.4" fill="none" stroke="#4c4c4c" stroke-width="0.4"/><path d="M16.80,198.74l1.7,1.6l-1.7,1.6z" fill="none" stroke="#a8a8a8" stroke-width="0.4"/><rect x="22.50" y="198.29" width="4.10" height="4.10" fill="#fff" stroke="#b4b4b4" stroke-width="0.45"/><path d="M23.20,200.34l1.02,1.15l1.84,-2.25" stroke="#5a5a5a" stroke-width="0.55" fill="none"/><path d="M29.80,197.64h2.3l0.6,0.8h3.3v4.3h-6.2z" fill="#e9a53e"/><path d="M29.80,198.84h6.2v0.7h-6.2z" fill="#f6cf86"/><path d="M9.00,208.38l2.1,0l0,-2.1z" fill="#6e6e6e"/><rect x="15.30" y="205.13" width="4.10" height="4.10" fill="#fff" stroke="#b4b4b4" stroke-width="0.45"/><path d="M16.00,207.18l1.02,1.15l1.84,-2.25" stroke="#5a5a5a" stroke-width="0.55" fill="none"/><path d="M25.70,204.58l0.9,1.8l1.9,0.8l-1.9,0.8l-0.9,1.8l-0.9,-1.8l-1.9,-0.8l1.9,-0.8z" fill="#f2c81e"/><rect x="22.50" y="211.97" width="4.10" height="4.10" fill="#fff" stroke="#b4b4b4" stroke-width="0.45"/><path d="M31.40,212.02h3.4M33.10,212.02v4.2" stroke="#2f7fd0" stroke-width="0.75" fill="none"/><g opacity="0.45"><rect x="22.50" y="218.81" width="4.10" height="4.10" fill="#fff" stroke="#b4b4b4" stroke-width="0.45"/><path d="M33.40,218.66l1.6,0.9l-1.6,0.9l1.6,0.9" stroke="#30a040" stroke-width="0.6" fill="none"/><rect x="33.40" y="221.86" width="1.4" height="1.2" fill="#e03030"/></g><rect x="109.2" y="125" width="0.9" height="25" fill="#a6a6a6"/><path d="M4.6,226.4l3,2.6l-1.4,0.2l-0.6,1.2z" fill="#111"/><rect x="7.4" y="228.6" width="3.4" height="2.8" fill="#e8e8e8" stroke="#555" stroke-width="0.5"/><rect x="13.4" y="226" width="5" height="4" fill="#f4e4e4" stroke="#d04848" stroke-width="0.6"/><path d="M16.6,228.4l3,2.8l-1.4,0.1l-0.5,1.1z" fill="#111"/><path d="M22.4,230.6l3,-4.6l3,4.6z" fill="#f8eaea" stroke="#d04848" stroke-width="0.55"/><path d="M25.6,228.8l2.8,2.6l-1.3,0.1l-0.5,1z" fill="#111"/><rect x="31.2" y="226.2" width="5.6" height="5.4" fill="#f0f0f0" stroke="#222" stroke-width="0.6"/><path d="M34,226.2v5.4M31.2,228.9h5.6" stroke="#222" stroke-width="0.5"/><rect x="34.4" y="226.6" width="2" height="1.9" fill="#d04848"/><rect x="40.4" y="227.6" width="4.6" height="4.2" fill="#555"/><path d="M41.4,228.6h2.6M41.4,229.8h2.6M41.4,231h2.6" stroke="#ddd" stroke-width="0.4"/><rect x="44.6" y="226" width="2" height="2" fill="#3a5ad0"/><path d="M45.6,227.8v3.8" stroke="#444" stroke-width="0.5" fill="none"/><rect x="53.2" y="226.6" width="5.6" height="3" fill="#e6e6e6" stroke="#8a8a8a" stroke-width="0.4"/><path d="M56,227.4v4M54.8,230l1.2,1.6l1.2,-1.6" stroke="#3a4ae0" stroke-width="0.6" fill="none"/><path d="M62,226.2l3,3M65,226.2l-3,3" stroke="#3a5ae0" stroke-width="0.7"/><path d="M61.6,231.4h6M64.6,227.6v3.8" stroke="#777" stroke-width="0.5"/><rect x="70.6" y="226" width="6.2" height="5.8" fill="#3a3a3a"/><rect x="72" y="227.2" width="3.4" height="3.4" fill="#b8c8f4"/><path d="M73.7,227.6v2.6" stroke="#2a3ad0" stroke-width="0.7"/><rect x="3" y="236.4" width="3.4" height="4.6" fill="#e9f0f8" stroke="#b9c6d8" stroke-width="0.3"/><rect x="35" y="236.6" width="4.4" height="4" fill="#6f9fdc"/><circle cx="37.2" cy="238.6" r="1.1" fill="#1f3f6f"/></svg>
<div class="t" style="left:1.80px;top:53.72px;font-size:8.70px;line-height:10.44px;color:#5e5e5e;transform:scaleX(0.948);text-shadow:none;">Εμφάνιση</div>
<div class="t" style="left:6.00px;top:68.29px;font-size:4.60px;line-height:5.52px;color:#444;">Σ1</div>
<div class="t" style="left:29.90px;top:88.60px;font-size:4.80px;line-height:5.76px;color:#484848;transform:scaleX(0.945);">Πλασματικό</div>
<div class="t" style="left:29.90px;top:95.44px;font-size:4.80px;line-height:5.76px;color:#484848;transform:scaleX(0.945);">Πεπερασμένα Στοιχεία Πλακών</div>
<div class="t" style="left:36.80px;top:102.28px;font-size:4.80px;line-height:5.76px;color:#484848;transform:scaleX(0.945);">Κόμβοι</div>
<div class="t" style="left:36.80px;top:109.12px;font-size:4.80px;line-height:5.76px;color:#484848;transform:scaleX(0.945);">Στοιχεία</div>
<div class="t" style="left:36.80px;top:115.96px;font-size:4.80px;line-height:5.76px;color:#484848;transform:scaleX(0.945);">Μάκρο-Κόμβοι</div>
<div class="t" style="left:36.80px;top:122.80px;font-size:4.80px;line-height:5.76px;color:#484848;transform:scaleX(0.945);">Οριακές Γραμμές</div>
<div class="t" style="left:44.20px;top:129.64px;font-size:4.80px;line-height:5.76px;color:#484848;transform:scaleX(0.945);">Όνομα</div>
<div class="t" style="left:44.20px;top:136.48px;font-size:4.80px;line-height:5.76px;color:#484848;transform:scaleX(0.945);">Κατεύθυνση</div>
<div class="t" style="left:36.80px;top:143.32px;font-size:4.80px;line-height:5.76px;color:#484848;transform:scaleX(0.945);">Μάκρο-Περιοχές</div>
<div class="t" style="left:44.20px;top:150.16px;font-size:4.80px;line-height:5.76px;color:#484848;transform:scaleX(0.945);">Με Γέμισμα</div>
<div class="t" style="left:44.20px;top:157.00px;font-size:4.80px;line-height:5.76px;color:#484848;transform:scaleX(0.945);">Όνομα</div>
<div class="t" style="left:44.20px;top:163.84px;font-size:4.80px;line-height:5.76px;color:#484848;transform:scaleX(0.945);">Στοιχείο Ελέγχου</div>
<div class="t" style="left:44.20px;top:170.68px;font-size:4.80px;line-height:5.76px;color:#484848;transform:scaleX(0.945);">Στοιχείο Ελέγχου Τάσεων - ...</div>
<div class="t" style="left:36.80px;top:177.52px;font-size:4.80px;line-height:5.76px;color:#484848;transform:scaleX(0.945);">Στηρίξεις</div>
<div class="t" style="left:36.80px;top:184.36px;font-size:4.80px;line-height:5.76px;color:#484848;transform:scaleX(0.945);">Πύκνωση Πεπερασμένων Στοιχ...</div>
<div class="t" style="left:36.80px;top:191.20px;font-size:4.80px;line-height:5.76px;color:#484848;transform:scaleX(0.945);">Γραμμές Ελέγχου Λειτουργικότ...</div>
<div class="t" style="left:36.80px;top:198.04px;font-size:4.80px;line-height:5.76px;color:#484848;transform:scaleX(0.945);">Φορτία</div>
<div class="t" style="left:29.90px;top:204.88px;font-size:4.80px;line-height:5.76px;color:#484848;transform:scaleX(0.945);">Κόμβοι</div>
<div class="t" style="left:36.80px;top:211.72px;font-size:4.80px;line-height:5.76px;color:#484848;transform:scaleX(0.945);">Όνομα</div>
<div class="t" style="left:36.80px;top:218.56px;font-size:4.80px;line-height:5.76px;color:#9a9a9a;transform:scaleX(0.945);">Ελατήρια</div>
<div class="t" style="left:7.60px;top:237.04px;font-size:4.50px;line-height:5.40px;color:#555;transform:scaleX(1.120);">Εμφάνιση</div>
<div class="t" style="left:41.30px;top:237.04px;font-size:4.50px;line-height:5.40px;color:#555;transform:scaleX(1.121);">Όψεις</div>
<div style="left:0.00px;top:263.00px;width:115.40px;height:10.00px;background:#efefef;"></div>
<div style="left:1.20px;top:273.00px;width:112.20px;height:166.00px;background:#ffffff;"></div>
<div style="left:31.60px;top:263.60px;width:11.80px;height:7.60px;background:#cbcbcb;"></div>
<div style="left:22.00px;top:375.45px;width:82.50px;height:6.60px;background:#ececec;"></div>
<svg width="768" height="448" viewBox="0 0 768 448"><path d="M91.90,254.40l1.6,1.8l1.6,-1.8z" fill="#5a5a5a"/><path d="M100.65,252.80h1.7v2.3h-1.7zM100.05,255.10h2.9M101.50,255.10v1.6" stroke="#5a5a5a" stroke-width="0.5" fill="none"/><path d="M107.75,253.75l2.5,2.5M110.25,253.75l-2.5,2.5" stroke="#5a5a5a" stroke-width="0.6" fill="none"/><rect x="48.0" y="264" width="6.4" height="5.6" fill="#fff" stroke="#9ab0d0" stroke-width="0.4"/><rect x="48.0" y="264" width="6.4" height="1.4" fill="#5f8fd8"/><rect x="52.2" y="267" width="1.4" height="3" fill="#c03030"/><rect x="57.2" y="264" width="6.4" height="5.6" fill="#fff" stroke="#9ab0d0" stroke-width="0.4"/><rect x="57.2" y="264" width="6.4" height="1.4" fill="#5f8fd8"/><rect x="61.4" y="267" width="1.4" height="3" fill="#c03030"/><path d="M3.20,275.00l1.7,1.6l-1.7,1.6z" fill="none" stroke="#a8a8a8" stroke-width="0.4"/><path d="M9.00,273.90h2.3l0.6,0.8h3.3v4.3h-6.2z" fill="#e9a53e"/><path d="M9.00,275.10h6.2v0.7h-6.2z" fill="#f6cf86"/><rect x="11.30" y="276.00" width="2.2" height="2.6" fill="#6b4a1a"/><path d="M2.80,284.61l2.1,0l0,-2.1z" fill="#6e6e6e"/><path d="M9.00,280.71h2.3l0.6,0.8h3.3v4.3h-6.2z" fill="#e9a53e"/><path d="M9.00,281.91h6.2v0.7h-6.2z" fill="#f6cf86"/><path d="M10.10,288.62l1.7,1.6l-1.7,1.6z" fill="none" stroke="#a8a8a8" stroke-width="0.4"/><path d="M16.00,287.52h2.3l0.6,0.8h3.3v4.3h-6.2z" fill="#e9a53e"/><path d="M16.00,288.72h6.2v0.7h-6.2z" fill="#f6cf86"/><path d="M9.70,298.23l2.1,0l0,-2.1z" fill="#6e6e6e"/><path d="M16.00,294.33h2.3l0.6,0.8h3.3v4.3h-6.2z" fill="#e9a53e"/><path d="M16.00,295.53h6.2v0.7h-6.2z" fill="#f6cf86"/><path d="M23.40,301.14h2.3l1.4,1.4v3.9h-3.7z" fill="#fff" stroke="#4c4c4c" stroke-width="0.5"/><path d="M25.70,301.14v1.4h1.4" fill="none" stroke="#4c4c4c" stroke-width="0.4"/><path d="M17.30,309.05l1.7,1.6l-1.7,1.6z" fill="none" stroke="#a8a8a8" stroke-width="0.4"/><path d="M22.60,307.95h2.3l0.6,0.8h3.3v4.3h-6.2z" fill="#e9a53e"/><path d="M22.60,309.15h6.2v0.7h-6.2z" fill="#f6cf86"/><path d="M17.30,315.86l1.7,1.6l-1.7,1.6z" fill="none" stroke="#a8a8a8" stroke-width="0.4"/><path d="M22.60,314.76h2.3l0.6,0.8h3.3v4.3h-6.2z" fill="#e9a53e"/><path d="M22.60,315.96h6.2v0.7h-6.2z" fill="#f6cf86"/><path d="M16.90,325.47l2.1,0l0,-2.1z" fill="#6e6e6e"/><path d="M22.60,321.57h2.3l0.6,0.8h3.3v4.3h-6.2z" fill="#e9a53e"/><path d="M22.60,322.77h6.2v0.7h-6.2z" fill="#f6cf86"/><path d="M30.00,328.38h2.3l1.4,1.4v3.9h-3.7z" fill="#fff" stroke="#4c4c4c" stroke-width="0.5"/><path d="M32.30,328.38v1.4h1.4" fill="none" stroke="#4c4c4c" stroke-width="0.4"/><path d="M30.00,335.19h2.3l1.4,1.4v3.9h-3.7z" fill="#fff" stroke="#4c4c4c" stroke-width="0.5"/><path d="M32.30,335.19v1.4h1.4" fill="none" stroke="#4c4c4c" stroke-width="0.4"/><path d="M30.00,342.00h2.3l1.4,1.4v3.9h-3.7z" fill="#fff" stroke="#4c4c4c" stroke-width="0.5"/><path d="M32.30,342.00v1.4h1.4" fill="none" stroke="#4c4c4c" stroke-width="0.4"/><path d="M30.00,348.81h2.3l1.4,1.4v3.9h-3.7z" fill="#fff" stroke="#4c4c4c" stroke-width="0.5"/><path d="M32.30,348.81v1.4h1.4" fill="none" stroke="#4c4c4c" stroke-width="0.4"/><path d="M9.70,359.52l2.1,0l0,-2.1z" fill="#6e6e6e"/><path d="M16.00,355.62h2.3l0.6,0.8h3.3v4.3h-6.2z" fill="#e9a53e"/><path d="M16.00,356.82h6.2v0.7h-6.2z" fill="#f6cf86"/><path d="M17.30,363.53l1.7,1.6l-1.7,1.6z" fill="none" stroke="#a8a8a8" stroke-width="0.4"/><path d="M22.60,362.43h2.3l0.6,0.8h3.3v4.3h-6.2z" fill="#e9a53e"/><path d="M22.60,363.63h6.2v0.7h-6.2z" fill="#f6cf86"/><path d="M23.40,369.24h2.3l1.4,1.4v3.9h-3.7z" fill="#fff" stroke="#4c4c4c" stroke-width="0.5"/><path d="M25.70,369.24v1.4h1.4" fill="none" stroke="#4c4c4c" stroke-width="0.4"/><path d="M23.40,376.05h2.3l1.4,1.4v3.9h-3.7z" fill="#fff" stroke="#4c4c4c" stroke-width="0.5"/><path d="M25.70,376.05v1.4h1.4" fill="none" stroke="#4c4c4c" stroke-width="0.4"/><path d="M10.10,383.96l1.7,1.6l-1.7,1.6z" fill="none" stroke="#a8a8a8" stroke-width="0.4"/><path d="M16.00,382.86h2.3l0.6,0.8h3.3v4.3h-6.2z" fill="#e9a53e"/><path d="M16.00,384.06h6.2v0.7h-6.2z" fill="#f6cf86"/><path d="M10.10,390.77l1.7,1.6l-1.7,1.6z" fill="none" stroke="#a8a8a8" stroke-width="0.4"/><path d="M16.00,389.67h2.3l0.6,0.8h3.3v4.3h-6.2z" fill="#e9a53e"/><path d="M16.00,390.87h6.2v0.7h-6.2z" fill="#f6cf86"/><path d="M10.10,397.58l1.7,1.6l-1.7,1.6z" fill="none" stroke="#a8a8a8" stroke-width="0.4"/><path d="M16.00,396.48h2.3l0.6,0.8h3.3v4.3h-6.2z" fill="#e9a53e"/><path d="M16.00,397.68h6.2v0.7h-6.2z" fill="#f6cf86"/><path d="M10.10,404.39l1.7,1.6l-1.7,1.6z" fill="none" stroke="#a8a8a8" stroke-width="0.4"/><path d="M16.00,403.29h2.3l0.6,0.8h3.3v4.3h-6.2z" fill="#e9a53e"/><path d="M16.00,404.49h6.2v0.7h-6.2z" fill="#f6cf86"/><path d="M10.10,411.20l1.7,1.6l-1.7,1.6z" fill="none" stroke="#a8a8a8" stroke-width="0.4"/><path d="M16.00,410.10h2.3l0.6,0.8h3.3v4.3h-6.2z" fill="#e9a53e"/><path d="M16.00,411.30h6.2v0.7h-6.2z" fill="#f6cf86"/><path d="M10.10,418.01l1.7,1.6l-1.7,1.6z" fill="none" stroke="#a8a8a8" stroke-width="0.4"/><path d="M16.00,416.91h2.3l0.6,0.8h3.3v4.3h-6.2z" fill="#e9a53e"/><path d="M16.00,418.11h6.2v0.7h-6.2z" fill="#f6cf86"/><path d="M10.10,424.82l1.7,1.6l-1.7,1.6z" fill="none" stroke="#a8a8a8" stroke-width="0.4"/><path d="M16.00,423.72h2.3l0.6,0.8h3.3v4.3h-6.2z" fill="#e9a53e"/><path d="M16.00,424.92h6.2v0.7h-6.2z" fill="#f6cf86"/><path d="M9.70,434.43l2.1,0l0,-2.1z" fill="#6e6e6e"/><path d="M16.00,430.53h2.3l0.6,0.8h3.3v4.3h-6.2z" fill="#e9a53e"/><path d="M16.00,431.73h6.2v0.7h-6.2z" fill="#f6cf86"/><path d="M23.40,437.34h2.3l1.4,1.4v3.9h-3.7z" fill="#fff" stroke="#4c4c4c" stroke-width="0.5"/><path d="M25.70,437.34v1.4h1.4" fill="none" stroke="#4c4c4c" stroke-width="0.4"/><rect x="110.3" y="279" width="0.9" height="46" fill="#a6a6a6"/></svg>
<div class="t" style="left:1.80px;top:251.22px;font-size:8.70px;line-height:10.44px;color:#5e5e5e;transform:scaleX(0.965);text-shadow:none;">Πλοήγηση</div>
<div class="t" style="left:5.00px;top:264.84px;font-size:4.50px;line-height:5.40px;color:#555;transform:scaleX(0.896);">Επιλ.</div>
<div class="t" style="left:17.60px;top:264.84px;font-size:4.50px;line-height:5.40px;color:#555;transform:scaleX(1.041);">Εικον</div>
<div class="t" style="left:33.60px;top:264.84px;font-size:4.50px;line-height:5.40px;color:#444;transform:scaleX(1.016);">Όλα</div>
<div class="t" style="left:16.20px;top:274.30px;font-size:4.80px;line-height:5.76px;color:#484848;transform:scaleX(0.955);">Βιβλιοθήκες</div>
<div class="t" style="left:16.20px;top:281.11px;font-size:4.80px;line-height:5.76px;color:#484848;transform:scaleX(0.955);">Δεδομένα</div>
<div class="t" style="left:23.00px;top:287.92px;font-size:4.80px;line-height:5.76px;color:#484848;transform:scaleX(0.955);">Κτίριο</div>
<div class="t" style="left:23.00px;top:294.73px;font-size:4.80px;line-height:5.76px;color:#484848;transform:scaleX(0.955);">Φορτίσεις</div>
<div class="t" style="left:29.70px;top:301.54px;font-size:4.80px;line-height:5.76px;color:#484848;transform:scaleX(0.955);">Συντελεστές</div>
<div class="t" style="left:29.70px;top:308.35px;font-size:4.80px;line-height:5.76px;color:#484848;transform:scaleX(0.955);">Περιπτώσεις-Συνδυασμοί Φόρτισης</div>
<div class="t" style="left:29.70px;top:315.16px;font-size:4.80px;line-height:5.76px;color:#484848;transform:scaleX(0.955);">Φορτία</div>
<div class="t" style="left:29.70px;top:321.97px;font-size:4.80px;line-height:5.76px;color:#484848;transform:scaleX(0.955);">Επιφάνειες Φόρτισης</div>
<div class="t" style="left:36.40px;top:328.78px;font-size:4.80px;line-height:5.76px;color:#484848;transform:scaleX(0.955);">Γεωμετρία</div>
<div class="t" style="left:36.40px;top:335.59px;font-size:4.80px;line-height:5.76px;color:#484848;transform:scaleX(0.955);">Σημεία Ορισμού</div>
<div class="t" style="left:36.40px;top:342.40px;font-size:4.80px;line-height:5.76px;color:#484848;transform:scaleX(0.955);">Επιφανειακά Φορτία</div>
<div class="t" style="left:36.40px;top:349.21px;font-size:4.80px;line-height:5.76px;color:#484848;transform:scaleX(0.955);">Έλεγχος Ισορροπίας Φορτίων</div>
<div class="t" style="left:23.00px;top:356.02px;font-size:4.80px;line-height:5.76px;color:#484848;transform:scaleX(0.955);">Ελέγχων</div>
<div class="t" style="left:29.70px;top:362.83px;font-size:4.80px;line-height:5.76px;color:#484848;transform:scaleX(0.955);">Αποτίμηση - Ενισχύσεις</div>
<div class="t" style="left:29.70px;top:369.64px;font-size:4.80px;line-height:5.76px;color:#484848;transform:scaleX(0.955);">Υπερωθητική Ανάλυση Ο/Σ</div>
<div class="t" style="left:29.70px;top:376.45px;font-size:4.80px;line-height:5.76px;color:#484848;transform:scaleX(0.955);">Έλεγχος Λειτουργικότητας Ο/Σ</div>
<div class="t" style="left:23.00px;top:383.26px;font-size:4.80px;line-height:5.76px;color:#484848;transform:scaleX(0.955);">Κόμβοι</div>
<div class="t" style="left:23.00px;top:390.07px;font-size:4.80px;line-height:5.76px;color:#484848;transform:scaleX(0.955);">Οπλισμένο Σκυρόδεμα</div>
<div class="t" style="left:23.00px;top:396.88px;font-size:4.80px;line-height:5.76px;color:#484848;transform:scaleX(0.955);">Μεταλλικά</div>
<div class="t" style="left:23.00px;top:403.69px;font-size:4.80px;line-height:5.76px;color:#484848;transform:scaleX(0.955);">Σύμμικτα</div>
<div class="t" style="left:23.00px;top:410.50px;font-size:4.80px;line-height:5.76px;color:#484848;transform:scaleX(0.955);">Φέρουσα Τοιχοποιία</div>
<div class="t" style="left:23.00px;top:417.31px;font-size:4.80px;line-height:5.76px;color:#484848;transform:scaleX(0.955);">Ξύλινα</div>
<div class="t" style="left:23.00px;top:424.12px;font-size:4.80px;line-height:5.76px;color:#484848;transform:scaleX(0.955);">Πλασματικά</div>
<div class="t" style="left:23.00px;top:430.93px;font-size:4.80px;line-height:5.76px;color:#484848;transform:scaleX(0.955);">Πεπερασμένα Στοιχεία Πλακών</div>
<div class="t" style="left:29.70px;top:437.74px;font-size:4.80px;line-height:5.76px;color:#484848;transform:scaleX(0.955);">Μάκρο-Κόμβοι</div>
<div style="left:0.00px;top:439.00px;width:768.00px;height:9.00px;background:#f1f1f1;"></div>
<svg width="768" height="448" viewBox="0 0 768 448"><rect x="183.4" y="441.4" width="6.4" height="5.2" fill="#e8f0fb" stroke="#7fa0d8" stroke-width="0.4"/><rect x="183.4" y="441.4" width="6.4" height="1.4" fill="#5f8fd8"/><path d="M191,443.6l0.8,1l0.8,-1z" fill="#555"/><rect x="195" y="441.6" width="7" height="4.8" fill="#fff"/><path d="M195,442.2h7M195,443.6h7M195,445h7M195,446.2h7" stroke="#2f6fd0" stroke-width="0.6"/><rect x="195" y="441.6" width="2.4" height="2.4" fill="#2f6fd0"/><path d="M551.8,446.2v-2.6h4.4v2.6z" fill="#e8b030"/><path d="M552.8,443.6v-1q1.2,-1.6 2.4,0v1" stroke="#b08020" stroke-width="0.5" fill="none"/><path d="M653.4,444l0.9,1.1l0.9,-1.1z" fill="#666"/><rect x="680.4" y="440.6" width="13.4" height="7" fill="#c7d6ee" stroke="#8fa8d0" stroke-width="0.4"/><rect x="694.8" y="440.6" width="18" height="7" fill="#c7d6ee" stroke="#8fa8d0" stroke-width="0.4"/><path d="M717,444.4h2.4M723.5,444.4h36M762.6,444.4h2.6M763.9,443.1v2.6" stroke="#777" stroke-width="0.5"/><rect x="740.3" y="441.6" width="1.5" height="5.4" fill="#333"/></svg>
<div class="t" style="left:4.00px;top:442.34px;font-size:4.50px;line-height:5.40px;color:#555;transform:scaleX(1.098);">www.tol.com.gr</div>
<div class="t" style="left:207.00px;top:442.34px;font-size:4.50px;line-height:5.40px;color:#444;transform:scaleX(1.037);">ΕΥΡΩΚΩΔΙΚΕΣ | Στατικά Φορτία</div>
<div class="t" style="left:389.70px;top:442.34px;font-size:4.50px;line-height:5.40px;color:#444;transform:scaleX(1.023);">Νέο Έργο</div>
<div class="t" style="left:563.00px;top:442.34px;font-size:4.50px;line-height:5.40px;color:#444;transform:scaleX(1.010);">x=21.161 y=5.189 z=2.600 m</div>
<div class="t" style="left:631.50px;top:442.34px;font-size:4.50px;line-height:5.40px;color:#444;transform:scaleX(0.992);">κάνναβος</div>
<div class="t" style="left:658.00px;top:442.34px;font-size:4.50px;line-height:5.40px;color:#444;transform:scaleX(1.091);">έλξη</div>
<div class="t" style="left:672.50px;top:442.34px;font-size:4.50px;line-height:5.40px;color:#444;">dxf</div>
<div class="t" style="left:682.40px;top:442.34px;font-size:4.50px;line-height:5.40px;color:#333;transform:scaleX(1.103);">έλξη</div>
<div class="t" style="left:696.20px;top:442.34px;font-size:4.50px;line-height:5.40px;color:#333;transform:scaleX(1.123);">κάθετα</div>
</div></body></html>
